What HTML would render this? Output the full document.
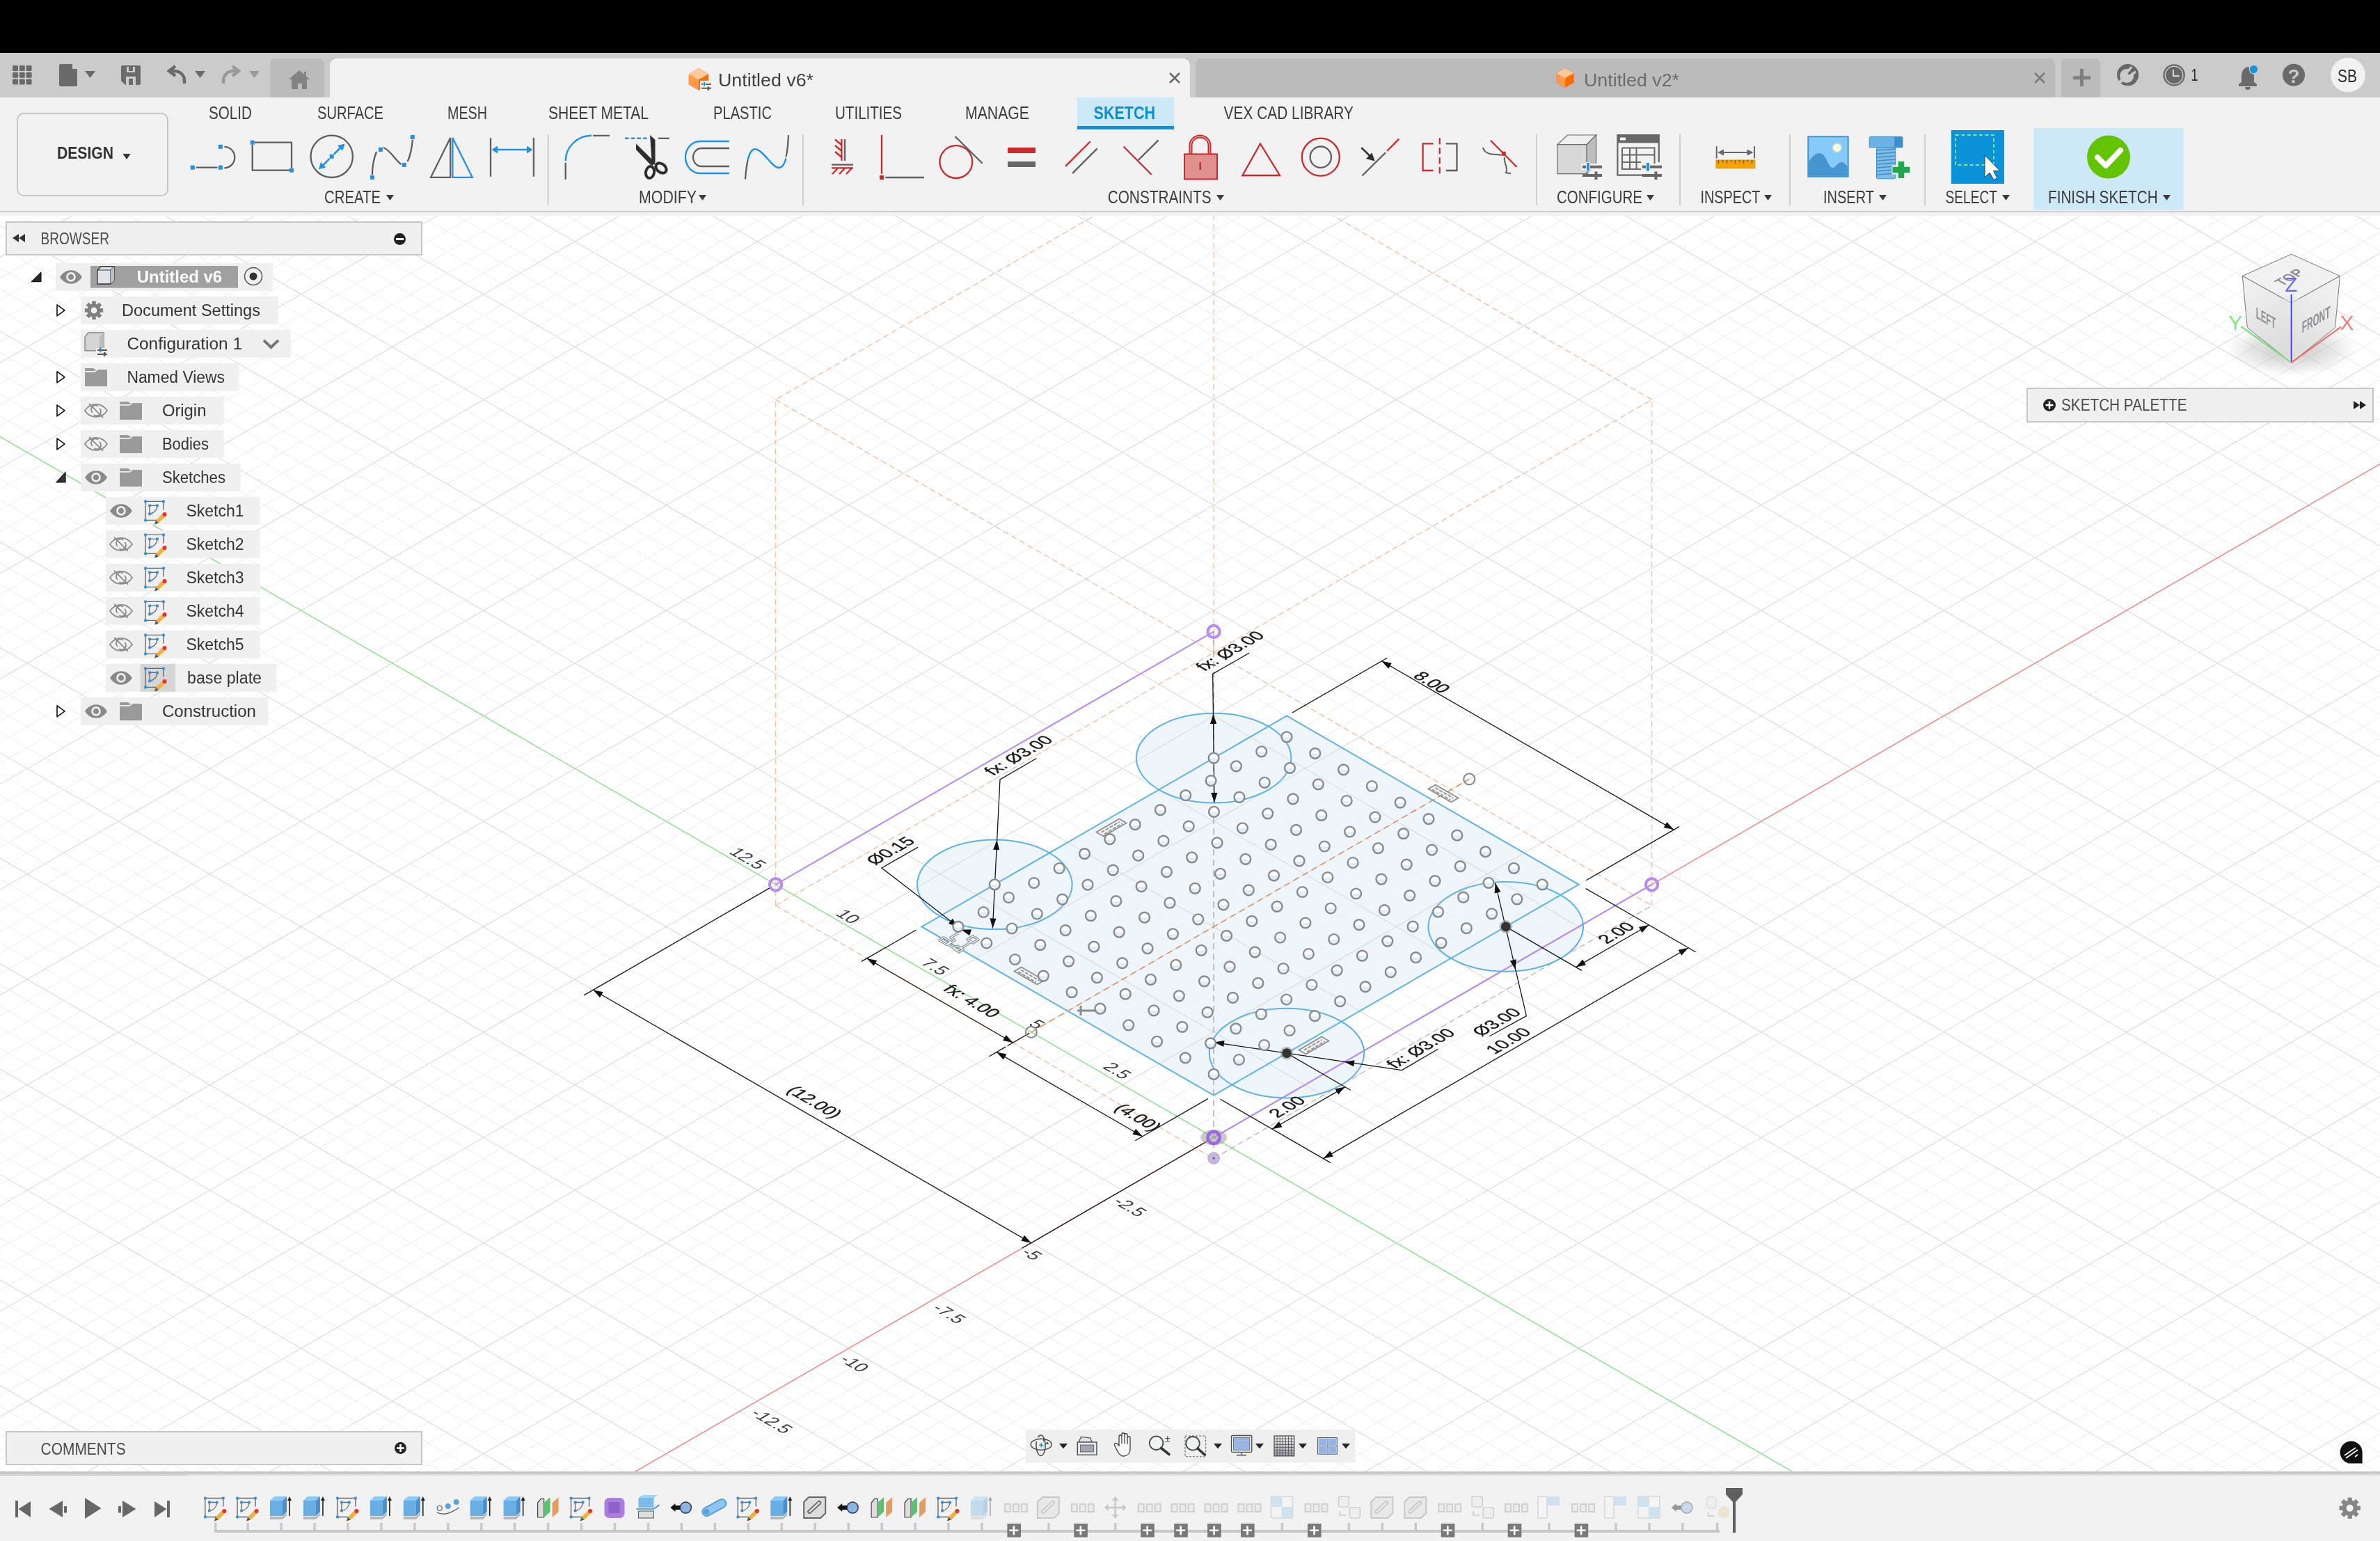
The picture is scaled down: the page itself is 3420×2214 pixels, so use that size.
<!DOCTYPE html><html><head><meta charset="utf-8"><style>
html,body{margin:0;padding:0;width:3420px;height:2214px;overflow:hidden;background:#fff;font-family:"Liberation Sans", sans-serif;}
.abs{position:absolute;}
svg text{font-family:"Liberation Sans", sans-serif;}
</style></head><body>
<div class="abs" style="left:0;top:0;width:3420px;height:76px;background:#000"></div>
<div class="abs" style="left:0;top:76px;width:3420px;height:64px;background:#cbcbcb"></div>
<div class="abs" style="left:0;top:140px;width:3420px;height:163px;background:#f2f2f2;border-bottom:2px solid #cbcbcb"></div><div class="abs" style="left:0;top:305px;width:3420px;height:5px;background:#f2f2f2"></div>
<div class="abs" style="left:0;top:2114px;width:3420px;height:100px;background:#f2f2f2"></div>
<svg class="abs" style="left:0;top:0;will-change:transform" width="3420" height="2214" viewBox="0 0 3420 2214"><defs><clipPath id="vpc"><rect x="0" y="310" width="3420" height="1804"/></clipPath></defs><g clip-path="url(#vpc)"><rect x="0" y="310" width="3420" height="1804" fill="#ffffff"/><g opacity="1"><path d="M1744.1 1573.7L2268.7 1270.8L1849.0 1028.5L1324.4 1331.4Z" fill="#eef6fc"/><ellipse cx="1849.0" cy="1513.1" rx="111.3" ry="64.3" fill="#eef6fc"/><ellipse cx="2163.8" cy="1331.4" rx="111.3" ry="64.3" fill="#eef6fc"/><ellipse cx="1429.3" cy="1270.8" rx="111.3" ry="64.3" fill="#eef6fc"/><ellipse cx="1744.1" cy="1089.1" rx="111.3" ry="64.3" fill="#eef6fc"/></g><path d="M0 2111.45L3420 4086.00M0 2081.16L3420 4055.71M0 2050.87L3420 4025.42M0 2020.58L3420 3995.14M0 1960.01L3420 3934.56M0 1929.72L3420 3904.27M0 1899.43L3420 3873.98M0 1869.14L3420 3843.70M0 1808.57L3420 3783.12M0 1778.28L3420 3752.83M0 1747.99L3420 3722.54M0 1717.70L3420 3692.26M0 1657.13L3420 3631.68M0 1626.84L3420 3601.39M0 1596.55L3420 3571.10M0 1566.26L3420 3540.82M0 1505.69L3420 3480.24M0 1475.40L3420 3449.95M0 1445.11L3420 3419.66M0 1414.82L3420 3389.38M0 1354.25L3420 3328.80M0 1323.96L3420 3298.51M0 1293.67L3420 3268.22M0 1263.38L3420 3237.94M0 1202.81L3420 3177.36M0 1172.52L3420 3147.07M0 1142.23L3420 3116.78M0 1111.94L3420 3086.50M0 1051.37L3420 3025.92M0 1021.08L3420 2995.63M0 990.79L3420 2965.34M0 960.50L3420 2935.06M0 899.93L3420 2874.48M0 869.64L3420 2844.19M0 839.35L3420 2813.90M0 809.06L3420 2783.62M0 748.49L3420 2723.04M0 718.20L3420 2692.75M0 687.91L3420 2662.46M0 657.62L3420 2632.18M0 597.05L3420 2571.60M0 566.76L3420 2541.31M0 536.47L3420 2511.02M0 506.18L3420 2480.74M0 445.61L3420 2420.16M0 415.32L3420 2389.87M0 385.03L3420 2359.58M0 354.74L3420 2329.30M0 294.17L3420 2268.72M0 263.88L3420 2238.43M0 233.59L3420 2208.14M0 203.30L3420 2177.86M0 142.73L3420 2117.28M0 112.44L3420 2086.99M0 82.15L3420 2056.70M0 51.86L3420 2026.42M0 -8.71L3420 1965.84M0 -39.00L3420 1935.55M0 -69.29L3420 1905.26M0 -99.58L3420 1874.98M0 -160.15L3420 1814.40M0 -190.44L3420 1784.11M0 -220.73L3420 1753.82M0 -251.02L3420 1723.54M0 -311.59L3420 1662.96M0 -341.88L3420 1632.67M0 -372.17L3420 1602.38M0 -402.46L3420 1572.10M0 -463.03L3420 1511.52M0 -493.32L3420 1481.23M0 -523.61L3420 1450.94M0 -553.90L3420 1420.66M0 -614.47L3420 1360.08M0 -644.76L3420 1329.79M0 -675.05L3420 1299.50M0 -705.34L3420 1269.22M0 -765.91L3420 1208.64M0 -796.20L3420 1178.35M0 -826.49L3420 1148.06M0 -856.78L3420 1117.78M0 -917.35L3420 1057.20M0 -947.64L3420 1026.91M0 -977.93L3420 996.62M0 -1008.22L3420 966.34M0 -1068.79L3420 905.76M0 -1099.08L3420 875.47M0 -1129.37L3420 845.18M0 -1159.66L3420 814.90M0 -1220.23L3420 754.32M0 -1250.52L3420 724.03M0 -1280.81L3420 693.74M0 -1311.10L3420 663.46M0 -1371.67L3420 602.88M0 -1401.96L3420 572.59M0 -1432.25L3420 542.30M0 -1462.54L3420 512.02M0 -1523.11L3420 451.44M0 -1553.40L3420 421.15M0 -1583.69L3420 390.86M0 -1613.98L3420 360.58M0 -1674.55L3420 300.00M0 4125.38L3420 2150.82M0 4095.09L3420 2120.54M0 4064.80L3420 2090.25M0 4034.51L3420 2059.96M0 3973.94L3420 1999.38M0 3943.65L3420 1969.10M0 3913.36L3420 1938.81M0 3883.07L3420 1908.52M0 3822.50L3420 1847.94M0 3792.21L3420 1817.66M0 3761.92L3420 1787.37M0 3731.63L3420 1757.08M0 3671.06L3420 1696.50M0 3640.77L3420 1666.22M0 3610.48L3420 1635.93M0 3580.19L3420 1605.64M0 3519.62L3420 1545.06M0 3489.33L3420 1514.78M0 3459.04L3420 1484.49M0 3428.75L3420 1454.20M0 3368.18L3420 1393.62M0 3337.89L3420 1363.34M0 3307.60L3420 1333.05M0 3277.31L3420 1302.76M0 3216.74L3420 1242.18M0 3186.45L3420 1211.90M0 3156.16L3420 1181.61M0 3125.87L3420 1151.32M0 3065.30L3420 1090.74M0 3035.01L3420 1060.46M0 3004.72L3420 1030.17M0 2974.43L3420 999.88M0 2913.86L3420 939.30M0 2883.57L3420 909.02M0 2853.28L3420 878.73M0 2822.99L3420 848.44M0 2762.42L3420 787.86M0 2732.13L3420 757.58M0 2701.84L3420 727.29M0 2671.55L3420 697.00M0 2610.98L3420 636.42M0 2580.69L3420 606.14M0 2550.40L3420 575.85M0 2520.11L3420 545.56M0 2459.54L3420 484.98M0 2429.25L3420 454.70M0 2398.96L3420 424.41M0 2368.67L3420 394.12M0 2308.10L3420 333.54M0 2277.81L3420 303.26M0 2247.52L3420 272.97M0 2217.23L3420 242.68M0 2156.66L3420 182.10M0 2126.37L3420 151.82M0 2096.08L3420 121.53M0 2065.79L3420 91.24M0 2005.22L3420 30.66M0 1974.93L3420 0.38M0 1944.64L3420 -29.91M0 1914.35L3420 -60.20M0 1853.78L3420 -120.78M0 1823.49L3420 -151.06M0 1793.20L3420 -181.35M0 1762.91L3420 -211.64M0 1702.34L3420 -272.22M0 1672.05L3420 -302.50M0 1641.76L3420 -332.79M0 1611.47L3420 -363.08M0 1550.90L3420 -423.66M0 1520.61L3420 -453.94M0 1490.32L3420 -484.23M0 1460.03L3420 -514.52M0 1399.46L3420 -575.10M0 1369.17L3420 -605.38M0 1338.88L3420 -635.67M0 1308.59L3420 -665.96M0 1248.02L3420 -726.54M0 1217.73L3420 -756.82M0 1187.44L3420 -787.11M0 1157.15L3420 -817.40M0 1096.58L3420 -877.98M0 1066.29L3420 -908.26M0 1036.00L3420 -938.55M0 1005.71L3420 -968.84M0 945.14L3420 -1029.42M0 914.85L3420 -1059.70M0 884.56L3420 -1089.99M0 854.27L3420 -1120.28M0 793.70L3420 -1180.86M0 763.41L3420 -1211.14M0 733.12L3420 -1241.43M0 702.83L3420 -1271.72M0 642.26L3420 -1332.30M0 611.97L3420 -1362.58M0 581.68L3420 -1392.87M0 551.39L3420 -1423.16M0 490.82L3420 -1483.74M0 460.53L3420 -1514.02M0 430.24L3420 -1544.31M0 399.95L3420 -1574.60M0 339.38L3420 -1635.18M0 309.09L3420 -1665.46M0 278.80L3420 -1695.75" stroke="#efefef" stroke-width="1.05" fill="none"/><path d="M0 2141.74L3420 4116.29M0 1990.30L3420 3964.85M0 1838.86L3420 3813.41M0 1687.42L3420 3661.97M0 1535.98L3420 3510.53M0 1384.54L3420 3359.09M0 1233.10L3420 3207.65M0 1081.66L3420 3056.21M0 930.22L3420 2904.77M0 778.78L3420 2753.33M0 627.34L3420 2601.89M0 475.90L3420 2450.45M0 324.46L3420 2299.01M0 173.02L3420 2147.57M0 21.58L3420 1996.13M0 -129.86L3420 1844.69M0 -281.30L3420 1693.25M0 -432.74L3420 1541.81M0 -584.18L3420 1390.37M0 -735.62L3420 1238.93M0 -887.06L3420 1087.49M0 -1038.50L3420 936.05M0 -1189.94L3420 784.61M0 -1341.38L3420 633.17M0 -1492.82L3420 481.73M0 -1644.26L3420 330.29M0 4155.66L3420 2181.11M0 4004.22L3420 2029.67M0 3852.78L3420 1878.23M0 3701.34L3420 1726.79M0 3549.90L3420 1575.35M0 3398.46L3420 1423.91M0 3247.02L3420 1272.47M0 3095.58L3420 1121.03M0 2944.14L3420 969.59M0 2792.70L3420 818.15M0 2641.26L3420 666.71M0 2489.82L3420 515.27M0 2338.38L3420 363.83M0 2186.94L3420 212.39M0 2035.50L3420 60.95M0 1884.06L3420 -90.49M0 1732.62L3420 -241.93M0 1581.18L3420 -393.37M0 1429.74L3420 -544.81M0 1278.30L3420 -696.25M0 1126.86L3420 -847.69M0 975.42L3420 -999.13M0 823.98L3420 -1150.57M0 672.54L3420 -1302.01M0 521.10L3420 -1453.45M0 369.66L3420 -1604.89" stroke="#dcdcdc" stroke-width="1.15" fill="none"/><defs><linearGradient id="holeg" x1="0" y1="0" x2="0" y2="1"><stop offset="0" stop-color="#f7fbfe"/><stop offset="0.45" stop-color="#ffffff"/><stop offset="0.6" stop-color="#d9ebf7"/><stop offset="1" stop-color="#eef6fb"/></linearGradient></defs><path d="M0 2641.3L3420 666.7" stroke="#f28a8a" stroke-width="1.5"/><path d="M0 627.3L3420 2601.9" stroke="#8ee68e" stroke-width="1.5"/><path d="M1744.1 937.7L2373.6 574.2" stroke="#f0c3a2" stroke-width="1.4" fill="none" stroke-dasharray="8 5.5" /><path d="M2373.6 574.2L1744.1 210.8" stroke="#f0c3a2" stroke-width="1.4" fill="none" stroke-dasharray="8 5.5" /><path d="M1744.1 210.8L1114.6 574.2" stroke="#f0c3a2" stroke-width="1.4" fill="none" stroke-dasharray="8 5.5" /><path d="M1114.6 574.2L1744.1 937.7" stroke="#f0c3a2" stroke-width="1.4" fill="none" stroke-dasharray="8 5.5" /><path d="M1114.6 1301.1L1744.1 1664.6" stroke="#f0c3a2" stroke-width="1.4" fill="none" stroke-dasharray="8 5.5" /><path d="M1114.6 1301.1L1744.1 937.7" stroke="#f0c3a2" stroke-width="1.4" fill="none" stroke-dasharray="8 5.5" /><path d="M1744.1 937.7L2373.6 1301.1" stroke="#f0c3a2" stroke-width="1.4" fill="none" stroke-dasharray="8 5.5" /><path d="M1744.1 1664.6L2373.6 1301.1" stroke="#b0b0b0" stroke-width="1.2" fill="none" stroke-dasharray="8 5.5" /><path d="M1114.6 1301.1L1114.6 574.2" stroke="#f0c3a2" stroke-width="1.4" fill="none" stroke-dasharray="8 5.5" /><path d="M2373.6 1301.1L2373.6 574.2" stroke="#f0c3a2" stroke-width="1.4" fill="none" stroke-dasharray="8 5.5" /><path d="M1744.1 937.7L1744.1 210.8" stroke="#f0c3a2" stroke-width="1.4" fill="none" stroke-dasharray="8 5.5" /><path d="M1744.1 937.7L1744.1 907.4" stroke="#f0c3a2" stroke-width="1.4" fill="none" stroke-dasharray="8 5.5" /><path d="M1481.8 1482.9L2111.3 1119.4" stroke="#dd8a4e" stroke-width="1.6" fill="none" stroke-dasharray="9 6" /><path d="M1744.1 1664.0L1744.1 907.0" stroke="#9c9c9c" stroke-width="1.25" fill="none" stroke-dasharray="9 6" /><path d="M1744.1 1634.3L2373.6 1270.8" stroke="#b98af4" stroke-width="2.1" fill="none" /><path d="M1114.6 1270.8L1744.1 907.4" stroke="#b98af4" stroke-width="2.1" fill="none" /><path d="M1744.1 1573.7L2268.7 1270.8L1849.0 1028.5L1324.4 1331.4Z" fill="none" stroke="#5db3e4" stroke-width="2.0"/><ellipse cx="1849.0" cy="1513.1" rx="111.3" ry="64.3" fill="none" stroke="#5db3e4" stroke-width="2.0"/><ellipse cx="2163.8" cy="1331.4" rx="111.3" ry="64.3" fill="none" stroke="#5db3e4" stroke-width="2.0"/><ellipse cx="1429.3" cy="1270.8" rx="111.3" ry="64.3" fill="none" stroke="#5db3e4" stroke-width="2.0"/><ellipse cx="1744.1" cy="1089.1" rx="111.3" ry="64.3" fill="none" stroke="#5db3e4" stroke-width="2.0"/><text x="0" y="0" font-size="25" fill="#3c3c3c" stroke="#3c3c3c" stroke-width="0" text-anchor="middle" transform="matrix(0.866,0.5,-0.866,0.5,1067.2,1237.5)">12.5</text><text x="0" y="0" font-size="25" fill="#3c3c3c" stroke="#3c3c3c" stroke-width="0" text-anchor="middle" transform="matrix(0.866,0.5,-0.866,0.5,1211.5,1320.9)">10</text><text x="0" y="0" font-size="25" fill="#3c3c3c" stroke="#3c3c3c" stroke-width="0" text-anchor="middle" transform="matrix(0.866,0.5,-0.866,0.5,1336.5,1393.3)">7.5</text><text x="0" y="0" font-size="25" fill="#3c3c3c" stroke="#3c3c3c" stroke-width="0" text-anchor="middle" transform="matrix(0.866,0.5,-0.866,0.5,1482.8,1475.8)">5</text><text x="0" y="0" font-size="25" fill="#3c3c3c" stroke="#3c3c3c" stroke-width="0" text-anchor="middle" transform="matrix(0.866,0.5,-0.866,0.5,1598.2,1542.5)">2.5</text><text x="0" y="0" font-size="25" fill="#3c3c3c" stroke="#3c3c3c" stroke-width="0" text-anchor="middle" transform="matrix(0.866,0.5,-0.866,0.5,1616.5,1738.2)">-2.5</text><text x="0" y="0" font-size="25" fill="#3c3c3c" stroke="#3c3c3c" stroke-width="0" text-anchor="middle" transform="matrix(0.866,0.5,-0.866,0.5,1475.4,1806.0)">-5</text><text x="0" y="0" font-size="25" fill="#3c3c3c" stroke="#3c3c3c" stroke-width="0" text-anchor="middle" transform="matrix(0.866,0.5,-0.866,0.5,1356.6,1891.6)">-7.5</text><text x="0" y="0" font-size="25" fill="#3c3c3c" stroke="#3c3c3c" stroke-width="0" text-anchor="middle" transform="matrix(0.866,0.5,-0.866,0.5,1220.4,1963.4)">-10</text><text x="0" y="0" font-size="25" fill="#3c3c3c" stroke="#3c3c3c" stroke-width="0" text-anchor="middle" transform="matrix(0.866,0.5,-0.866,0.5,1101.6,2046.1)">-12.5</text><path d="M1106.7 1275.4L839.2 1429.9" stroke="#161616" stroke-width="1.3" fill="none" /><path d="M1736.2 1638.8L1468.7 1793.3" stroke="#161616" stroke-width="1.3" fill="none" /><path d="M852.3 1422.3L1481.8 1785.7" stroke="#161616" stroke-width="1.3" fill="none" /><path d="M852.3 1422.3L866.7 1425.3L862.1 1433.3Z" fill="#111"/><path d="M1481.8 1785.7L1467.4 1782.7L1472.0 1774.8Z" fill="#111"/><text x="0" y="0" font-size="25" fill="#1a1a1a" stroke="#1a1a1a" stroke-width="0.45" text-anchor="middle" transform="matrix(0.866,0.5,-0.866,0.5,1163.2,1587.5)">(12.00)</text><path d="M1316.6 1336.0L1237.9 1381.4" stroke="#161616" stroke-width="1.3" fill="none" /><path d="M1479.2 1484.4L1447.7 1502.5" stroke="#161616" stroke-width="1.3" fill="none" /><path d="M1245.7 1376.9L1455.6 1498.0" stroke="#2a1a10" stroke-width="1.3" fill="none" /><path d="M1245.7 1376.9L1260.2 1379.9L1255.6 1387.8Z" fill="#111"/><path d="M1455.6 1498.0L1441.1 1495.0L1445.7 1487.0Z" fill="#111"/><text x="0" y="0" font-size="25" fill="#1a1a1a" stroke="#1a1a1a" stroke-width="0.45" text-anchor="middle" transform="matrix(0.866,0.5,-0.866,0.5,1389.2,1442.5)">fx: 4.00</text><path d="M1445.1 1504.1L1421.5 1517.7" stroke="#161616" stroke-width="1.3" fill="none" /><path d="M1735.7 1578.6L1631.3 1638.8" stroke="#161616" stroke-width="1.3" fill="none" /><path d="M1432.0 1511.6L1641.8 1632.8" stroke="#161616" stroke-width="1.3" fill="none" /><path d="M1432.0 1511.6L1446.4 1514.6L1441.8 1522.6Z" fill="#111"/><path d="M1641.8 1632.8L1627.4 1629.8L1632.0 1621.8Z" fill="#111"/><text x="0" y="0" font-size="25" fill="#1a1a1a" stroke="#1a1a1a" stroke-width="0.45" text-anchor="middle" transform="matrix(0.866,0.5,-0.866,0.5,1628.2,1609.5)">(4.00)</text><path d="M1856.9 1024.0L1993.3 945.2" stroke="#161616" stroke-width="1.3" fill="none" /><path d="M2279.2 1264.8L2413.0 1187.6" stroke="#161616" stroke-width="1.3" fill="none" /><path d="M1985.4 949.8L2405.1 1192.1" stroke="#161616" stroke-width="1.3" fill="none" /><path d="M1985.4 949.8L1999.8 952.8L1995.2 960.8Z" fill="#111"/><path d="M2405.1 1192.1L2390.7 1189.1L2395.3 1181.1Z" fill="#111"/><text x="0" y="0" font-size="25" fill="#1a1a1a" stroke="#1a1a1a" stroke-width="0.45" text-anchor="middle" transform="matrix(0.866,0.5,-0.866,0.5,2050.2,984.5)">8.00</text><path d="M1753.5 1579.2L1912.0 1670.6" stroke="#161616" stroke-width="1.3" fill="none" /><path d="M2278.7 1276.6L2436.6 1367.8" stroke="#161616" stroke-width="1.3" fill="none" /><path d="M1901.5 1664.6L2426.1 1361.7" stroke="#161616" stroke-width="1.3" fill="none" /><path d="M1901.5 1664.6L1911.3 1653.6L1915.9 1661.6Z" fill="#111"/><path d="M2426.1 1361.7L2416.3 1372.7L2411.7 1364.7Z" fill="#111"/><text x="0" y="0" font-size="25" fill="#1a1a1a" stroke="#1a1a1a" stroke-width="0.45" text-anchor="middle" transform="matrix(0.866,-0.5,0.866,0.5,2174.8,1499.5)">10.00</text><path d="M1849.0 1513.1L1940.8 1566.2" stroke="#161616" stroke-width="1.3" fill="none" /><path d="M1828.0 1622.2L1933.0 1561.6" stroke="#161616" stroke-width="1.3" fill="none" /><path d="M1828.0 1622.2L1837.9 1611.2L1842.5 1619.2Z" fill="#111"/><path d="M1933.0 1561.6L1923.1 1572.6L1918.5 1564.6Z" fill="#111"/><text x="0" y="0" font-size="25" fill="#1a1a1a" stroke="#1a1a1a" stroke-width="0.45" text-anchor="middle" transform="matrix(0.866,-0.5,0.866,0.5,1856.8,1594.5)">2.00</text><path d="M2163.8 1331.4L2272.9 1394.4" stroke="#161616" stroke-width="1.3" fill="none" /><path d="M2264.5 1389.6L2369.4 1329.0" stroke="#161616" stroke-width="1.3" fill="none" /><path d="M2264.5 1389.6L2274.3 1378.6L2278.9 1386.6Z" fill="#111"/><path d="M2369.4 1329.0L2359.6 1340.0L2355.0 1332.0Z" fill="#111"/><text x="0" y="0" font-size="25" fill="#1a1a1a" stroke="#1a1a1a" stroke-width="0.45" text-anchor="middle" transform="matrix(0.866,-0.5,0.866,0.5,2329.8,1344.5)">2.00</text><path d="M1745 1153L1742.7 968.2L1795 938.3" stroke="#161616" stroke-width="1.3" fill="none"/><path d="M1743.5 1026.0L1748.2 1040.0L1739.0 1040.0Z" fill="#111"/><path d="M1745.0 1153.0L1740.2 1139.1L1749.4 1138.9Z" fill="#111"/><text x="0" y="0" font-size="25" fill="#1a1a1a" stroke="#1a1a1a" stroke-width="0.45" text-anchor="middle" transform="matrix(0.866,-0.5,0.866,0.5,1774.8,939.5)">fx: Ø3.00</text><path d="M1426.4 1333.5L1437 1120L1489.5 1089.5" stroke="#161616" stroke-width="1.3" fill="none"/><path d="M1432.4 1207.0L1436.2 1221.2L1427.1 1220.7Z" fill="#111"/><path d="M1426.4 1333.5L1422.4 1319.3L1431.6 1319.7Z" fill="#111"/><text x="0" y="0" font-size="25" fill="#1a1a1a" stroke="#1a1a1a" stroke-width="0.45" text-anchor="middle" transform="matrix(0.866,-0.5,0.866,0.5,1470.8,1089.5)">fx: Ø3.00</text><path d="M1319.2 1217.1L1267 1247L1376 1331" stroke="#161616" stroke-width="1.3" fill="none"/><path d="M1377.0 1332.0L1363.1 1327.1L1368.7 1319.8Z" fill="#111"/><path d="M1381.3 1335.4L1396.0 1335.5L1393.1 1344.2Z" fill="#111"/><text x="0" y="0" font-size="25" fill="#1a1a1a" stroke="#1a1a1a" stroke-width="0.45" text-anchor="middle" transform="matrix(0.866,-0.5,0.866,0.5,1286.8,1226.5)">Ø0.15</text><path d="M1747 1498L2014.3 1537.6L2066.4 1507.3" stroke="#161616" stroke-width="1.3" fill="none"/><path d="M1745.0 1497.5L1759.5 1495.0L1758.2 1504.1Z" fill="#111"/><path d="M1932.0 1525.8L1946.5 1523.2L1945.2 1532.3Z" fill="#111"/><text x="0" y="0" font-size="25" fill="#1a1a1a" stroke="#1a1a1a" stroke-width="0.45" text-anchor="middle" transform="matrix(0.866,-0.5,0.866,0.5,2048.8,1510.5)">fx: Ø3.00</text><path d="M2148.7 1268.7L2193.4 1459.6L2140.3 1488.8" stroke="#161616" stroke-width="1.3" fill="none"/><path d="M2148.7 1268.7L2156.5 1281.2L2147.6 1283.4Z" fill="#111"/><path d="M2177.5 1393.0L2169.9 1380.4L2178.9 1378.3Z" fill="#111"/><text x="0" y="0" font-size="25" fill="#1a1a1a" stroke="#1a1a1a" stroke-width="0.45" text-anchor="middle" transform="matrix(0.866,-0.5,0.866,0.5,2157.8,1472.5)">Ø3.00</text><path d="M2062.7 1127.5L2095.7 1146.5L2085.3 1152.5L2052.3 1133.5Z" fill="#f2f2f2" stroke="#8c8c8c" stroke-width="1.7"/><path d="M2062.3 1131.8L2088.3 1146.8M2058.0 1134.2L2084.0 1149.2" stroke="#8c8c8c" stroke-width="1.8" stroke-dasharray="5 2"/><path d="M1575.4 1195.5L1608.3 1176.5L1618.6 1182.5L1585.7 1201.5Z" fill="#f2f2f2" stroke="#8c8c8c" stroke-width="1.7"/><path d="M1582.7 1195.8L1608.7 1180.8M1587.0 1198.2L1613.0 1183.2" stroke="#8c8c8c" stroke-width="1.8" stroke-dasharray="5 2"/><path d="M1467.7 1389.5L1500.6 1408.5L1490.3 1414.5L1457.4 1395.5Z" fill="#f2f2f2" stroke="#8c8c8c" stroke-width="1.7"/><path d="M1467.3 1393.8L1493.3 1408.8M1463.0 1396.2L1489.0 1411.2" stroke="#8c8c8c" stroke-width="1.8" stroke-dasharray="5 2"/><path d="M1866.4 1508.5L1899.3 1489.5L1909.6 1495.5L1876.7 1514.5Z" fill="#f2f2f2" stroke="#8c8c8c" stroke-width="1.7"/><path d="M1873.7 1508.8L1899.7 1493.8M1878.0 1511.2L1904.0 1496.2" stroke="#8c8c8c" stroke-width="1.8" stroke-dasharray="5 2"/><path d="M1548 1452L1575 1452M1553 1445V1459" stroke="#8c8c8c" stroke-width="3"/><path d="M1376.8 1340.6L1366 1347L1372 1351L1362 1357L1376 1365L1390 1357L1397 1351M1350 1351L1356 1347L1366 1353L1360 1357Z M1390 1350L1398 1345L1406 1350L1398 1355Z M1370 1362L1376 1359L1384 1364L1378 1368Z" fill="none" stroke="#8c8c8c" stroke-width="3.6" stroke-linejoin="round"/><path d="M1376.8 1340.6L1366 1347L1372 1351L1362 1357L1376 1365L1390 1357L1397 1351M1350 1351L1356 1347L1366 1353L1360 1357Z M1390 1350L1398 1345L1406 1350L1398 1355Z M1370 1362L1376 1359L1384 1364L1378 1368Z" fill="none" stroke="#f4f8fb" stroke-width="1.3" stroke-linejoin="round"/><circle cx="1744.1" cy="1543.4" r="7.4" fill="url(#holeg)" stroke="#8a8a8a" stroke-width="2.4"/><circle cx="1703.3" cy="1519.9" r="7.4" fill="url(#holeg)" stroke="#8a8a8a" stroke-width="2.4"/><circle cx="1662.5" cy="1496.3" r="7.4" fill="url(#holeg)" stroke="#8a8a8a" stroke-width="2.4"/><circle cx="1621.7" cy="1472.8" r="7.4" fill="url(#holeg)" stroke="#8a8a8a" stroke-width="2.4"/><circle cx="1580.9" cy="1449.2" r="7.4" fill="url(#holeg)" stroke="#8a8a8a" stroke-width="2.4"/><circle cx="1540.1" cy="1425.6" r="7.4" fill="url(#holeg)" stroke="#8a8a8a" stroke-width="2.4"/><circle cx="1499.3" cy="1402.1" r="7.4" fill="url(#holeg)" stroke="#8a8a8a" stroke-width="2.4"/><circle cx="1458.5" cy="1378.5" r="7.4" fill="url(#holeg)" stroke="#8a8a8a" stroke-width="2.4"/><circle cx="1417.7" cy="1355.0" r="7.4" fill="url(#holeg)" stroke="#8a8a8a" stroke-width="2.4"/><circle cx="1376.9" cy="1331.4" r="7.4" fill="url(#holeg)" stroke="#8a8a8a" stroke-width="2.4"/><circle cx="1780.4" cy="1522.5" r="7.4" fill="url(#holeg)" stroke="#8a8a8a" stroke-width="2.4"/><circle cx="1739.6" cy="1498.9" r="7.4" fill="url(#holeg)" stroke="#8a8a8a" stroke-width="2.4"/><circle cx="1698.8" cy="1475.4" r="7.4" fill="url(#holeg)" stroke="#8a8a8a" stroke-width="2.4"/><circle cx="1658.0" cy="1451.8" r="7.4" fill="url(#holeg)" stroke="#8a8a8a" stroke-width="2.4"/><circle cx="1617.2" cy="1428.2" r="7.4" fill="url(#holeg)" stroke="#8a8a8a" stroke-width="2.4"/><circle cx="1576.4" cy="1404.7" r="7.4" fill="url(#holeg)" stroke="#8a8a8a" stroke-width="2.4"/><circle cx="1535.6" cy="1381.1" r="7.4" fill="url(#holeg)" stroke="#8a8a8a" stroke-width="2.4"/><circle cx="1494.8" cy="1357.6" r="7.4" fill="url(#holeg)" stroke="#8a8a8a" stroke-width="2.4"/><circle cx="1454.0" cy="1334.0" r="7.4" fill="url(#holeg)" stroke="#8a8a8a" stroke-width="2.4"/><circle cx="1413.2" cy="1310.5" r="7.4" fill="url(#holeg)" stroke="#8a8a8a" stroke-width="2.4"/><circle cx="1816.7" cy="1501.5" r="7.4" fill="url(#holeg)" stroke="#8a8a8a" stroke-width="2.4"/><circle cx="1775.9" cy="1477.9" r="7.4" fill="url(#holeg)" stroke="#8a8a8a" stroke-width="2.4"/><circle cx="1735.1" cy="1454.4" r="7.4" fill="url(#holeg)" stroke="#8a8a8a" stroke-width="2.4"/><circle cx="1694.3" cy="1430.8" r="7.4" fill="url(#holeg)" stroke="#8a8a8a" stroke-width="2.4"/><circle cx="1653.5" cy="1407.3" r="7.4" fill="url(#holeg)" stroke="#8a8a8a" stroke-width="2.4"/><circle cx="1612.7" cy="1383.7" r="7.4" fill="url(#holeg)" stroke="#8a8a8a" stroke-width="2.4"/><circle cx="1571.9" cy="1360.2" r="7.4" fill="url(#holeg)" stroke="#8a8a8a" stroke-width="2.4"/><circle cx="1531.1" cy="1336.6" r="7.4" fill="url(#holeg)" stroke="#8a8a8a" stroke-width="2.4"/><circle cx="1490.3" cy="1313.0" r="7.4" fill="url(#holeg)" stroke="#8a8a8a" stroke-width="2.4"/><circle cx="1449.5" cy="1289.5" r="7.4" fill="url(#holeg)" stroke="#8a8a8a" stroke-width="2.4"/><circle cx="1853.1" cy="1480.5" r="7.4" fill="url(#holeg)" stroke="#8a8a8a" stroke-width="2.4"/><circle cx="1812.3" cy="1457.0" r="7.4" fill="url(#holeg)" stroke="#8a8a8a" stroke-width="2.4"/><circle cx="1771.5" cy="1433.4" r="7.4" fill="url(#holeg)" stroke="#8a8a8a" stroke-width="2.4"/><circle cx="1730.6" cy="1409.9" r="7.4" fill="url(#holeg)" stroke="#8a8a8a" stroke-width="2.4"/><circle cx="1689.8" cy="1386.3" r="7.4" fill="url(#holeg)" stroke="#8a8a8a" stroke-width="2.4"/><circle cx="1649.0" cy="1362.7" r="7.4" fill="url(#holeg)" stroke="#8a8a8a" stroke-width="2.4"/><circle cx="1608.2" cy="1339.2" r="7.4" fill="url(#holeg)" stroke="#8a8a8a" stroke-width="2.4"/><circle cx="1567.4" cy="1315.6" r="7.4" fill="url(#holeg)" stroke="#8a8a8a" stroke-width="2.4"/><circle cx="1526.6" cy="1292.1" r="7.4" fill="url(#holeg)" stroke="#8a8a8a" stroke-width="2.4"/><circle cx="1485.8" cy="1268.5" r="7.4" fill="url(#holeg)" stroke="#8a8a8a" stroke-width="2.4"/><circle cx="1889.4" cy="1459.6" r="7.4" fill="url(#holeg)" stroke="#8a8a8a" stroke-width="2.4"/><circle cx="1848.6" cy="1436.0" r="7.4" fill="url(#holeg)" stroke="#8a8a8a" stroke-width="2.4"/><circle cx="1807.8" cy="1412.4" r="7.4" fill="url(#holeg)" stroke="#8a8a8a" stroke-width="2.4"/><circle cx="1767.0" cy="1388.9" r="7.4" fill="url(#holeg)" stroke="#8a8a8a" stroke-width="2.4"/><circle cx="1726.2" cy="1365.3" r="7.4" fill="url(#holeg)" stroke="#8a8a8a" stroke-width="2.4"/><circle cx="1685.4" cy="1341.8" r="7.4" fill="url(#holeg)" stroke="#8a8a8a" stroke-width="2.4"/><circle cx="1644.6" cy="1318.2" r="7.4" fill="url(#holeg)" stroke="#8a8a8a" stroke-width="2.4"/><circle cx="1603.8" cy="1294.7" r="7.4" fill="url(#holeg)" stroke="#8a8a8a" stroke-width="2.4"/><circle cx="1563.0" cy="1271.1" r="7.4" fill="url(#holeg)" stroke="#8a8a8a" stroke-width="2.4"/><circle cx="1522.2" cy="1247.5" r="7.4" fill="url(#holeg)" stroke="#8a8a8a" stroke-width="2.4"/><circle cx="1925.7" cy="1438.6" r="7.4" fill="url(#holeg)" stroke="#8a8a8a" stroke-width="2.4"/><circle cx="1884.9" cy="1415.0" r="7.4" fill="url(#holeg)" stroke="#8a8a8a" stroke-width="2.4"/><circle cx="1844.1" cy="1391.5" r="7.4" fill="url(#holeg)" stroke="#8a8a8a" stroke-width="2.4"/><circle cx="1803.3" cy="1367.9" r="7.4" fill="url(#holeg)" stroke="#8a8a8a" stroke-width="2.4"/><circle cx="1762.5" cy="1344.4" r="7.4" fill="url(#holeg)" stroke="#8a8a8a" stroke-width="2.4"/><circle cx="1721.7" cy="1320.8" r="7.4" fill="url(#holeg)" stroke="#8a8a8a" stroke-width="2.4"/><circle cx="1680.9" cy="1297.2" r="7.4" fill="url(#holeg)" stroke="#8a8a8a" stroke-width="2.4"/><circle cx="1640.1" cy="1273.7" r="7.4" fill="url(#holeg)" stroke="#8a8a8a" stroke-width="2.4"/><circle cx="1599.3" cy="1250.1" r="7.4" fill="url(#holeg)" stroke="#8a8a8a" stroke-width="2.4"/><circle cx="1558.5" cy="1226.6" r="7.4" fill="url(#holeg)" stroke="#8a8a8a" stroke-width="2.4"/><circle cx="1962.0" cy="1417.6" r="7.4" fill="url(#holeg)" stroke="#8a8a8a" stroke-width="2.4"/><circle cx="1921.2" cy="1394.1" r="7.4" fill="url(#holeg)" stroke="#8a8a8a" stroke-width="2.4"/><circle cx="1880.4" cy="1370.5" r="7.4" fill="url(#holeg)" stroke="#8a8a8a" stroke-width="2.4"/><circle cx="1839.6" cy="1347.0" r="7.4" fill="url(#holeg)" stroke="#8a8a8a" stroke-width="2.4"/><circle cx="1798.8" cy="1323.4" r="7.4" fill="url(#holeg)" stroke="#8a8a8a" stroke-width="2.4"/><circle cx="1758.0" cy="1299.8" r="7.4" fill="url(#holeg)" stroke="#8a8a8a" stroke-width="2.4"/><circle cx="1717.2" cy="1276.3" r="7.4" fill="url(#holeg)" stroke="#8a8a8a" stroke-width="2.4"/><circle cx="1676.4" cy="1252.7" r="7.4" fill="url(#holeg)" stroke="#8a8a8a" stroke-width="2.4"/><circle cx="1635.6" cy="1229.2" r="7.4" fill="url(#holeg)" stroke="#8a8a8a" stroke-width="2.4"/><circle cx="1594.8" cy="1205.6" r="7.4" fill="url(#holeg)" stroke="#8a8a8a" stroke-width="2.4"/><circle cx="1998.3" cy="1396.7" r="7.4" fill="url(#holeg)" stroke="#8a8a8a" stroke-width="2.4"/><circle cx="1957.5" cy="1373.1" r="7.4" fill="url(#holeg)" stroke="#8a8a8a" stroke-width="2.4"/><circle cx="1916.7" cy="1349.5" r="7.4" fill="url(#holeg)" stroke="#8a8a8a" stroke-width="2.4"/><circle cx="1875.9" cy="1326.0" r="7.4" fill="url(#holeg)" stroke="#8a8a8a" stroke-width="2.4"/><circle cx="1835.1" cy="1302.4" r="7.4" fill="url(#holeg)" stroke="#8a8a8a" stroke-width="2.4"/><circle cx="1794.3" cy="1278.9" r="7.4" fill="url(#holeg)" stroke="#8a8a8a" stroke-width="2.4"/><circle cx="1753.5" cy="1255.3" r="7.4" fill="url(#holeg)" stroke="#8a8a8a" stroke-width="2.4"/><circle cx="1712.7" cy="1231.8" r="7.4" fill="url(#holeg)" stroke="#8a8a8a" stroke-width="2.4"/><circle cx="1671.9" cy="1208.2" r="7.4" fill="url(#holeg)" stroke="#8a8a8a" stroke-width="2.4"/><circle cx="1631.1" cy="1184.6" r="7.4" fill="url(#holeg)" stroke="#8a8a8a" stroke-width="2.4"/><circle cx="2034.6" cy="1375.7" r="7.4" fill="url(#holeg)" stroke="#8a8a8a" stroke-width="2.4"/><circle cx="1993.8" cy="1352.1" r="7.4" fill="url(#holeg)" stroke="#8a8a8a" stroke-width="2.4"/><circle cx="1953.0" cy="1328.6" r="7.4" fill="url(#holeg)" stroke="#8a8a8a" stroke-width="2.4"/><circle cx="1912.2" cy="1305.0" r="7.4" fill="url(#holeg)" stroke="#8a8a8a" stroke-width="2.4"/><circle cx="1871.4" cy="1281.5" r="7.4" fill="url(#holeg)" stroke="#8a8a8a" stroke-width="2.4"/><circle cx="1830.6" cy="1257.9" r="7.4" fill="url(#holeg)" stroke="#8a8a8a" stroke-width="2.4"/><circle cx="1789.8" cy="1234.3" r="7.4" fill="url(#holeg)" stroke="#8a8a8a" stroke-width="2.4"/><circle cx="1749.0" cy="1210.8" r="7.4" fill="url(#holeg)" stroke="#8a8a8a" stroke-width="2.4"/><circle cx="1708.2" cy="1187.2" r="7.4" fill="url(#holeg)" stroke="#8a8a8a" stroke-width="2.4"/><circle cx="1667.4" cy="1163.7" r="7.4" fill="url(#holeg)" stroke="#8a8a8a" stroke-width="2.4"/><circle cx="2071.0" cy="1354.7" r="7.4" fill="url(#holeg)" stroke="#8a8a8a" stroke-width="2.4"/><circle cx="2030.2" cy="1331.2" r="7.4" fill="url(#holeg)" stroke="#8a8a8a" stroke-width="2.4"/><circle cx="1989.4" cy="1307.6" r="7.4" fill="url(#holeg)" stroke="#8a8a8a" stroke-width="2.4"/><circle cx="1948.6" cy="1284.0" r="7.4" fill="url(#holeg)" stroke="#8a8a8a" stroke-width="2.4"/><circle cx="1907.8" cy="1260.5" r="7.4" fill="url(#holeg)" stroke="#8a8a8a" stroke-width="2.4"/><circle cx="1867.0" cy="1236.9" r="7.4" fill="url(#holeg)" stroke="#8a8a8a" stroke-width="2.4"/><circle cx="1826.2" cy="1213.4" r="7.4" fill="url(#holeg)" stroke="#8a8a8a" stroke-width="2.4"/><circle cx="1785.4" cy="1189.8" r="7.4" fill="url(#holeg)" stroke="#8a8a8a" stroke-width="2.4"/><circle cx="1744.5" cy="1166.3" r="7.4" fill="url(#holeg)" stroke="#8a8a8a" stroke-width="2.4"/><circle cx="1703.7" cy="1142.7" r="7.4" fill="url(#holeg)" stroke="#8a8a8a" stroke-width="2.4"/><circle cx="2107.3" cy="1333.7" r="7.4" fill="url(#holeg)" stroke="#8a8a8a" stroke-width="2.4"/><circle cx="2066.5" cy="1310.2" r="7.4" fill="url(#holeg)" stroke="#8a8a8a" stroke-width="2.4"/><circle cx="2025.7" cy="1286.6" r="7.4" fill="url(#holeg)" stroke="#8a8a8a" stroke-width="2.4"/><circle cx="1984.9" cy="1263.1" r="7.4" fill="url(#holeg)" stroke="#8a8a8a" stroke-width="2.4"/><circle cx="1944.1" cy="1239.5" r="7.4" fill="url(#holeg)" stroke="#8a8a8a" stroke-width="2.4"/><circle cx="1903.3" cy="1216.0" r="7.4" fill="url(#holeg)" stroke="#8a8a8a" stroke-width="2.4"/><circle cx="1862.5" cy="1192.4" r="7.4" fill="url(#holeg)" stroke="#8a8a8a" stroke-width="2.4"/><circle cx="1821.7" cy="1168.8" r="7.4" fill="url(#holeg)" stroke="#8a8a8a" stroke-width="2.4"/><circle cx="1780.9" cy="1145.3" r="7.4" fill="url(#holeg)" stroke="#8a8a8a" stroke-width="2.4"/><circle cx="1740.1" cy="1121.7" r="7.4" fill="url(#holeg)" stroke="#8a8a8a" stroke-width="2.4"/><circle cx="2143.6" cy="1312.8" r="7.4" fill="url(#holeg)" stroke="#8a8a8a" stroke-width="2.4"/><circle cx="2102.8" cy="1289.2" r="7.4" fill="url(#holeg)" stroke="#8a8a8a" stroke-width="2.4"/><circle cx="2062.0" cy="1265.7" r="7.4" fill="url(#holeg)" stroke="#8a8a8a" stroke-width="2.4"/><circle cx="2021.2" cy="1242.1" r="7.4" fill="url(#holeg)" stroke="#8a8a8a" stroke-width="2.4"/><circle cx="1980.4" cy="1218.6" r="7.4" fill="url(#holeg)" stroke="#8a8a8a" stroke-width="2.4"/><circle cx="1939.6" cy="1195.0" r="7.4" fill="url(#holeg)" stroke="#8a8a8a" stroke-width="2.4"/><circle cx="1898.8" cy="1171.4" r="7.4" fill="url(#holeg)" stroke="#8a8a8a" stroke-width="2.4"/><circle cx="1858.0" cy="1147.9" r="7.4" fill="url(#holeg)" stroke="#8a8a8a" stroke-width="2.4"/><circle cx="1817.2" cy="1124.3" r="7.4" fill="url(#holeg)" stroke="#8a8a8a" stroke-width="2.4"/><circle cx="1776.4" cy="1100.8" r="7.4" fill="url(#holeg)" stroke="#8a8a8a" stroke-width="2.4"/><circle cx="2179.9" cy="1291.8" r="7.4" fill="url(#holeg)" stroke="#8a8a8a" stroke-width="2.4"/><circle cx="2139.1" cy="1268.3" r="7.4" fill="url(#holeg)" stroke="#8a8a8a" stroke-width="2.4"/><circle cx="2098.3" cy="1244.7" r="7.4" fill="url(#holeg)" stroke="#8a8a8a" stroke-width="2.4"/><circle cx="2057.5" cy="1221.1" r="7.4" fill="url(#holeg)" stroke="#8a8a8a" stroke-width="2.4"/><circle cx="2016.7" cy="1197.6" r="7.4" fill="url(#holeg)" stroke="#8a8a8a" stroke-width="2.4"/><circle cx="1975.9" cy="1174.0" r="7.4" fill="url(#holeg)" stroke="#8a8a8a" stroke-width="2.4"/><circle cx="1935.1" cy="1150.5" r="7.4" fill="url(#holeg)" stroke="#8a8a8a" stroke-width="2.4"/><circle cx="1894.3" cy="1126.9" r="7.4" fill="url(#holeg)" stroke="#8a8a8a" stroke-width="2.4"/><circle cx="1853.5" cy="1103.4" r="7.4" fill="url(#holeg)" stroke="#8a8a8a" stroke-width="2.4"/><circle cx="1812.7" cy="1079.8" r="7.4" fill="url(#holeg)" stroke="#8a8a8a" stroke-width="2.4"/><circle cx="2216.2" cy="1270.8" r="7.4" fill="url(#holeg)" stroke="#8a8a8a" stroke-width="2.4"/><circle cx="2175.4" cy="1247.3" r="7.4" fill="url(#holeg)" stroke="#8a8a8a" stroke-width="2.4"/><circle cx="2134.6" cy="1223.7" r="7.4" fill="url(#holeg)" stroke="#8a8a8a" stroke-width="2.4"/><circle cx="2093.8" cy="1200.2" r="7.4" fill="url(#holeg)" stroke="#8a8a8a" stroke-width="2.4"/><circle cx="2053.0" cy="1176.6" r="7.4" fill="url(#holeg)" stroke="#8a8a8a" stroke-width="2.4"/><circle cx="2012.2" cy="1153.1" r="7.4" fill="url(#holeg)" stroke="#8a8a8a" stroke-width="2.4"/><circle cx="1971.4" cy="1129.5" r="7.4" fill="url(#holeg)" stroke="#8a8a8a" stroke-width="2.4"/><circle cx="1930.6" cy="1105.9" r="7.4" fill="url(#holeg)" stroke="#8a8a8a" stroke-width="2.4"/><circle cx="1889.8" cy="1082.4" r="7.4" fill="url(#holeg)" stroke="#8a8a8a" stroke-width="2.4"/><circle cx="1849.0" cy="1058.8" r="7.4" fill="url(#holeg)" stroke="#8a8a8a" stroke-width="2.4"/><circle cx="1429.3" cy="1270.8" r="7.4" fill="url(#holeg)" stroke="#8a8a8a" stroke-width="2.4"/><circle cx="1744.1" cy="1089.1" r="7.4" fill="url(#holeg)" stroke="#8a8a8a" stroke-width="2.4"/><circle cx="1849.0" cy="1513.1" r="9.5" fill="#8a8a8a" opacity="0.5"/><circle cx="1849.0" cy="1513.1" r="6.8" fill="#333"/><circle cx="2163.8" cy="1331.4" r="9.5" fill="#8a8a8a" opacity="0.5"/><circle cx="2163.8" cy="1331.4" r="6.8" fill="#333"/><circle cx="1114.6" cy="1270.8" r="8.6" fill="none" stroke="#b98af4" stroke-width="4"/><circle cx="2373.6" cy="1270.8" r="8.6" fill="none" stroke="#b98af4" stroke-width="4"/><circle cx="1744.1" cy="907.4" r="8.6" fill="none" stroke="#b98af4" stroke-width="4"/><ellipse cx="1744.1" cy="1634.3" rx="19" ry="11" fill="#9a9a9a" opacity="0.55"/><circle cx="1744.1" cy="1634.3" r="8.6" fill="none" stroke="#9d66e0" stroke-width="4.5"/><circle cx="1744.1" cy="1664" r="8" fill="#c9b3e6" stroke="#b9b9b9" stroke-width="2"/><circle cx="1744.1" cy="1664" r="1.5" fill="#555"/><circle cx="1481.8" cy="1482.9" r="8" fill="none" stroke="#8f8f8f" stroke-width="2.3"/><circle cx="2111.3" cy="1119.4" r="8" fill="none" stroke="#8f8f8f" stroke-width="2.3"/></g></svg><svg class="abs" style="left:0;top:0;will-change:transform" width="3420" height="2214" viewBox="0 0 3420 2214"><rect x="18.0" y="94.0" width="8" height="8" rx="1.6" fill="#6a6a6a"/><rect x="18.0" y="103.8" width="8" height="8" rx="1.6" fill="#6a6a6a"/><rect x="18.0" y="113.6" width="8" height="8" rx="1.6" fill="#6a6a6a"/><rect x="27.8" y="94.0" width="8" height="8" rx="1.6" fill="#6a6a6a"/><rect x="27.8" y="103.8" width="8" height="8" rx="1.6" fill="#6a6a6a"/><rect x="27.8" y="113.6" width="8" height="8" rx="1.6" fill="#6a6a6a"/><rect x="37.6" y="94.0" width="8" height="8" rx="1.6" fill="#6a6a6a"/><rect x="37.6" y="103.8" width="8" height="8" rx="1.6" fill="#6a6a6a"/><rect x="37.6" y="113.6" width="8" height="8" rx="1.6" fill="#6a6a6a"/><path d="M87 92H103L111 100V122a2 2 0 0 1-2 2H87a2 2 0 0 1-2-2V94a2 2 0 0 1 2-2Z" fill="#6a6a6a"/><path d="M103 92V100H111" fill="#cbcbcb" opacity="0.0"/><path d="M104 92L111 99H104Z" fill="#cbcbcb"/><path d="M122 102L137 102L129.5 112Z" fill="#6a6a6a"/><path d="M176 94H200a2 2 0 0 1 2 2V120a2 2 0 0 1-2 2H180L174 116V96a2 2 0 0 1 2-2Z" fill="#6a6a6a"/><rect x="182" y="96" width="12" height="8" fill="#cbcbcb"/><rect x="185" y="96" width="6" height="6" fill="#6a6a6a"/><rect x="181" y="110" width="14" height="12" fill="#cbcbcb"/><rect x="185" y="113" width="6" height="9" fill="#6a6a6a"/><path d="M265 120V116C265 107 258 102 250 102H245" stroke="#6a6a6a" stroke-width="4.5" fill="none"/><path d="M252 95L243 102L252 109" stroke="#6a6a6a" stroke-width="4.5" fill="none" stroke-linejoin="miter"/><path d="M280 102L295 102L287.5 112Z" fill="#6a6a6a"/><path d="M321 120V116C321 107 328 102 336 102H341" stroke="#999999" stroke-width="4.5" fill="none"/><path d="M334 95L343 102L334 109" stroke="#999999" stroke-width="4.5" fill="none"/><path d="M358 102L373 102L365.5 112Z" fill="#999999"/><path d="M388 140V92a8 8 0 0 1 8-8H458a8 8 0 0 1 8 8V140Z" fill="#bbbbbb"/><path d="M430 101L445 114H441V128H434V120H428V128H419V114H415Z" fill="#838383"/><rect x="437" y="103" width="3" height="7" fill="#838383"/><path d="M474 140V94a10 10 0 0 1 10-10H1700a10 10 0 0 1 10 10V140Z" fill="#f2f2f2"/><path d="M1004.0 98.0L1018.0 106.4L1018.0 121.6L1004.0 129.5L990.0 121.6L990.0 106.4Z" fill="#ff9a4c" stroke="#e9843a" stroke-width="0.6"/><path d="M1004.0 98.0L1018.0 106.4L1004.0 114.4L990.0 106.4Z" fill="#ffc99c"/><path d="M1004.0 114.4L1018.0 106.4L1018.0 121.6L1004.0 129.5Z" fill="#ff6c06"/><rect x="1006" y="116" width="16" height="14" fill="#f2f2f2"/><path d="M1008 120.9H1022M1008 126.8H1022" stroke="#5e5e5e" stroke-width="2"/><rect x="1010.6" y="117.5" width="3" height="6.5" fill="#1c8fe6" stroke="#f2f2f2" stroke-width="0.8"/><rect x="1016.6" y="124.5" width="2.6" height="5.5" fill="#5e5e5e"/><text x="1032" y="124" font-size="26" fill="#404040" font-weight="normal" text-anchor="start" textLength="137" lengthAdjust="spacingAndGlyphs" >Untitled v6*</text><path d="M1681 105L1695 119M1695 105L1681 119" stroke="#6a6a6a" stroke-width="2.6"/><path d="M1718 140V92a8 8 0 0 1 8-8H2945a8 8 0 0 1 8 8V140Z" fill="#bbbbbb"/><path d="M2249.1 98.0L2261.4 105.3L2261.4 118.7L2249.1 125.6L2236.9 118.7L2236.9 105.3Z" fill="#ff9a4c" stroke="#e9843a" stroke-width="0.6"/><path d="M2249.1 98.0L2261.4 105.3L2249.1 112.3L2236.9 105.3Z" fill="#ffc99c"/><path d="M2249.1 112.3L2261.4 105.3L2261.4 118.7L2249.1 125.6Z" fill="#ff6c06"/><text x="2276" y="124" font-size="26" fill="#6c6c6c" font-weight="normal" text-anchor="start" textLength="137" lengthAdjust="spacingAndGlyphs" >Untitled v2*</text><path d="M2924 105L2938 119M2938 105L2924 119" stroke="#7a7a7a" stroke-width="2.6"/><path d="M2962 140V92a8 8 0 0 1 8-8H3010a8 8 0 0 1 8 8V140Z" fill="#bbbbbb"/><path d="M2979 111.7H3004M2991.4 99V124" stroke="#808080" stroke-width="5"/><circle cx="3057.6" cy="107.6" r="15.6" fill="#676767"/><circle cx="3056.1" cy="109.1" r="10" fill="#cbcbcb"/><path d="M3055.6 103.6L3062.4 97.1M3061.1 110.1L3067.7999999999997 103.6" stroke="#cbcbcb" stroke-width="3.3" stroke-linecap="round"/><path d="M3058.6 106.6L3063.6 101.6" stroke="#676767" stroke-width="3.6"/><path d="M3049.6 114.6L3043.6 120.6" stroke="#cbcbcb" stroke-width="4.5"/><circle cx="3124.1" cy="107.9" r="14.6" stroke="#676767" stroke-width="2.3" fill="none"/><circle cx="3124.1" cy="107.9" r="12" fill="#676767"/><path d="M3122.9 100.3V109.1H3131.7" stroke="#d6d6d6" stroke-width="2.1" fill="none"/><text x="3148.5" y="115.6" font-size="23" fill="#2a2a2a" font-weight="normal" text-anchor="start" textLength="10" lengthAdjust="spacingAndGlyphs" >1</text><path d="M3230 93V96C3223 98 3221 104 3221 110V118L3217 121V124H3243V121L3239 118V110C3239 104 3237 98 3230 96Z" fill="#6a6a6a"/><path d="M3226 125a4 4 0 0 0 8 0Z" fill="#6a6a6a"/><circle cx="3238.5" cy="99.6" r="6.2" fill="#1a93db" stroke="#cbcbcb" stroke-width="1.2"/><circle cx="3296" cy="107.7" r="16" fill="#6a6a6a"/><text x="3296" y="118.5" font-size="28" fill="#cbcbcb" font-weight="bold" text-anchor="middle" >?</text><circle cx="3374" cy="107.7" r="24.8" fill="#f2f2f2"/><text x="3373" y="117.5" font-size="25" fill="#2a2a2a" font-weight="normal" text-anchor="middle" textLength="28" lengthAdjust="spacingAndGlyphs" >SB</text><rect x="25" y="163" width="216" height="118" rx="9" fill="#f2f2f2" stroke="#c6c6c6" stroke-width="2"/><text x="82" y="228" font-size="23" fill="#333333" font-weight="bold" text-anchor="start" textLength="81" lengthAdjust="spacingAndGlyphs" >DESIGN</text><path d="M176.5 221L187.6 221L182.05 229Z" fill="#333333"/><text x="300" y="171" font-size="25" fill="#3c3c3c" font-weight="normal" text-anchor="start" textLength="62" lengthAdjust="spacingAndGlyphs" >SOLID</text><text x="456" y="171" font-size="25" fill="#3c3c3c" font-weight="normal" text-anchor="start" textLength="95" lengthAdjust="spacingAndGlyphs" >SURFACE</text><text x="643" y="171" font-size="25" fill="#3c3c3c" font-weight="normal" text-anchor="start" textLength="57" lengthAdjust="spacingAndGlyphs" >MESH</text><text x="788" y="171" font-size="25" fill="#3c3c3c" font-weight="normal" text-anchor="start" textLength="144" lengthAdjust="spacingAndGlyphs" >SHEET METAL</text><text x="1025" y="171" font-size="25" fill="#3c3c3c" font-weight="normal" text-anchor="start" textLength="84" lengthAdjust="spacingAndGlyphs" >PLASTIC</text><text x="1200" y="171" font-size="25" fill="#3c3c3c" font-weight="normal" text-anchor="start" textLength="96" lengthAdjust="spacingAndGlyphs" >UTILITIES</text><text x="1387" y="171" font-size="25" fill="#3c3c3c" font-weight="normal" text-anchor="start" textLength="92" lengthAdjust="spacingAndGlyphs" >MANAGE</text><text x="1758.6" y="171" font-size="25" fill="#3c3c3c" font-weight="normal" text-anchor="start" textLength="186.4" lengthAdjust="spacingAndGlyphs" >VEX CAD LIBRARY</text><rect x="1548" y="140" width="139" height="46" fill="#cde8f6"/><rect x="1548" y="181" width="139" height="5" fill="#0a93d8"/><text x="1571.6" y="171" font-size="25" fill="#0b8fd6" font-weight="bold" text-anchor="start" textLength="88.4" lengthAdjust="spacingAndGlyphs" >SKETCH</text><text x="466" y="292" font-size="25" fill="#3c3c3c" font-weight="normal" text-anchor="start" textLength="81" lengthAdjust="spacingAndGlyphs" >CREATE</text><path d="M555 280L566 280L560.5 288Z" fill="#3c3c3c"/><text x="918" y="292" font-size="25" fill="#3c3c3c" font-weight="normal" text-anchor="start" textLength="83" lengthAdjust="spacingAndGlyphs" >MODIFY</text><path d="M1004 280L1015 280L1009.5 288Z" fill="#3c3c3c"/><text x="1591.7" y="292" font-size="25" fill="#3c3c3c" font-weight="normal" text-anchor="start" textLength="149" lengthAdjust="spacingAndGlyphs" >CONSTRAINTS</text><path d="M1748 280L1759 280L1753.5 288Z" fill="#3c3c3c"/><text x="2237" y="292" font-size="25" fill="#3c3c3c" font-weight="normal" text-anchor="start" textLength="123" lengthAdjust="spacingAndGlyphs" >CONFIGURE</text><path d="M2366 280L2377 280L2371.5 288Z" fill="#3c3c3c"/><text x="2443.5" y="292" font-size="25" fill="#3c3c3c" font-weight="normal" text-anchor="start" textLength="86" lengthAdjust="spacingAndGlyphs" >INSPECT</text><path d="M2535 280L2546 280L2540.5 288Z" fill="#3c3c3c"/><text x="2620" y="292" font-size="25" fill="#3c3c3c" font-weight="normal" text-anchor="start" textLength="73" lengthAdjust="spacingAndGlyphs" >INSERT</text><path d="M2700 280L2711 280L2705.5 288Z" fill="#3c3c3c"/><text x="2795.6" y="292" font-size="25" fill="#3c3c3c" font-weight="normal" text-anchor="start" textLength="74.4" lengthAdjust="spacingAndGlyphs" >SELECT</text><path d="M2877 280L2888 280L2882.5 288Z" fill="#3c3c3c"/><rect x="786.7" y="193" width="2" height="102" fill="#cfcfcf"/><rect x="1153" y="193" width="2" height="102" fill="#cfcfcf"/><rect x="2207" y="193" width="2" height="102" fill="#cfcfcf"/><rect x="2413" y="193" width="2" height="102" fill="#cfcfcf"/><rect x="2571" y="193" width="2" height="102" fill="#cfcfcf"/><rect x="2765" y="193" width="2" height="102" fill="#cfcfcf"/><rect x="2922" y="184" width="216" height="118" fill="#cde8f6"/><text x="2943" y="292" font-size="25" fill="#3c3c3c" font-weight="normal" text-anchor="start" textLength="157.6" lengthAdjust="spacingAndGlyphs" >FINISH SKETCH</text><path d="M3108 280L3119 280L3113.5 288Z" fill="#3c3c3c"/><circle cx="3030" cy="225.6" r="31" fill="#62c400"/><path d="M3014 226L3026 238L3047 216" stroke="#fff" stroke-width="8" fill="none" stroke-linecap="round" stroke-linejoin="round"/><path d="M281.8 240.7H312.4M322.3 210.8A15 15.3 0 0 1 322.3 241.4" stroke="#5e5e5e" stroke-width="2.3" fill="none"/><rect x="273.8" y="237.7" width="6" height="6" fill="#2190e8"/><rect x="313.8" y="237.7" width="6" height="6" fill="#2190e8"/><rect x="313.8" y="207.8" width="6" height="6" fill="#2190e8"/><path d="M366 204.7H419V241M416 244.6H362.7V208" stroke="#5e5e5e" stroke-width="2.3" fill="none"/><rect x="359.7" y="201.7" width="6" height="6" fill="#2190e8"/><rect x="416.0" y="241.6" width="6" height="6" fill="#2190e8"/><circle cx="476.7" cy="224.8" r="30.2" stroke="#5e5e5e" stroke-width="2.3" fill="none"/><path d="M480 221.5L491 210.5M473.4 228.1L462.4 239.1" stroke="#2190e8" stroke-width="2.6"/><path d="M495.5 206.4L485 209L492.5 216.5Z M457.9 243.2L468.4 240.6L460.9 233.1Z" fill="#2190e8"/><rect x="473.7" y="221.8" width="6" height="6" fill="#2190e8"/><path d="M534.9 251C535 238 537 228 541 218M551 212C560 215 570 232 576.5 236M585.5 232C589 226 592 212 592.8 201" stroke="#5e5e5e" stroke-width="2.3" fill="none"/><rect x="531.9" y="251.9" width="6" height="6" fill="#2190e8"/><rect x="543.9" y="211.9" width="6" height="6" fill="#2190e8"/><rect x="577.7" y="234.0" width="6" height="6" fill="#2190e8"/><rect x="589.8" y="194.0" width="6" height="6" fill="#2190e8"/><path d="M619 254.9L647.2 198.1V254.9Z" stroke="#5e5e5e" stroke-width="2.3" fill="none" stroke-linejoin="miter"/><path d="M650.4 198.1V254.9H678.8Z" stroke="#2190e8" stroke-width="2.3" fill="none"/><path d="M705 198V253.8M766.9 198V253.8" stroke="#5e5e5e" stroke-width="2.3"/><path d="M712 215H760" stroke="#2190e8" stroke-width="2.3"/><path d="M706.5 215L715 209.5V220.5Z M765.4 215L757 209.5V220.5Z" fill="#2190e8"/><path d="M812.7 231.3A37.4 36.5 0 0 1 850.1 194.8" stroke="#2190e8" stroke-width="2.4" fill="none"/><path d="M852 194.8H876M812.7 233.8V257.8" stroke="#5e5e5e" stroke-width="2.3"/><path d="M898 198.8H930" stroke="#2190e8" stroke-width="2.4" stroke-dasharray="5.5 3.2"/><path d="M946 198.8H961.7" stroke="#5e5e5e" stroke-width="2.3"/><path d="M934 194L941.5 201V235L937 238Z" fill="#2e2e2e"/><path d="M914 206.5V215L936 238L940 232Z" fill="#2e2e2e"/><ellipse cx="934" cy="247.5" rx="6" ry="8.5" stroke="#2e2e2e" stroke-width="4" fill="none" transform="rotate(10 934 247.5)"/><ellipse cx="950" cy="241.5" rx="6" ry="8.5" stroke="#2e2e2e" stroke-width="4" fill="none" transform="rotate(-50 950 241.5)"/><path d="M1048 203H1006A21 23 0 0 0 1006 249H1048" stroke="#2190e8" stroke-width="2.4" fill="none"/><path d="M1048 213H1008A12 13 0 0 0 1008 239H1048" stroke="#5e5e5e" stroke-width="2.3" fill="none"/><path d="M1071 257.4C1071.5 248 1073 238 1074.5 229.8M1133 194C1132.5 205 1131.5 218 1129.4 225.5" stroke="#5e5e5e" stroke-width="2.3" fill="none"/><path d="M1074.5 229.8C1077 220 1080 214 1085 214.3C1097 215 1109 241 1119 241C1124 241 1127.5 235 1129.4 227.5" stroke="#2190e8" stroke-width="2.4" fill="none"/><path d="M1214 200V231M1195 236.6H1226" stroke="#5e5e5e" stroke-width="2.3"/><path d="M1209.4 200V231M1195 241.3H1226M1200 200.5L1209 208M1200 209L1209 216.5M1200 218L1209 225.5M1196 250L1204 241.5M1206 250L1214 241.5M1216 250L1224 241.5" stroke="#cc2a2a" stroke-width="2.3" fill="none"/><path d="M1267 194V249.7" stroke="#cc2a2a" stroke-width="2.3"/><rect x="1264.0" y="252.0" width="6" height="6" fill="#cc2a2a"/><path d="M1272.3 255H1328" stroke="#5e5e5e" stroke-width="2.3"/><circle cx="1373.8" cy="232.6" r="23.4" stroke="#cc2a2a" stroke-width="2.3" fill="none"/><path d="M1372.5 196L1411.7 234.7" stroke="#5e5e5e" stroke-width="2.3"/><rect x="1448" y="212" width="40" height="8" fill="#cc2a2a"/><rect x="1448" y="232" width="40" height="8" fill="#676767"/><path d="M1531 238.9L1566.7 203.3" stroke="#cc2a2a" stroke-width="2.3"/><path d="M1541.2 248.9L1576.7 213.4" stroke="#5e5e5e" stroke-width="2.3"/><path d="M1614.5 210.5L1654.6 250.8" stroke="#cc2a2a" stroke-width="2.3"/><path d="M1635.7 230L1664.6 201.4" stroke="#5e5e5e" stroke-width="2.3"/><path d="M1711 221V209a13.5 13 0 0 1 27 0V221" stroke="#cc2a2a" stroke-width="5" fill="none"/><path d="M1711 221V209a13.5 13 0 0 1 27 0V221" stroke="#e39a9a" stroke-width="1.6" fill="none"/><rect x="1702" y="221.4" width="47" height="36" fill="#e0908f" stroke="#cc2a2a" stroke-width="2"/><path d="M1724.7 233V244" stroke="#cc2a2a" stroke-width="2.5"/><path d="M1785.4 252L1811 206.5L1839 252Z" stroke="#cc2a2a" stroke-width="2.3" fill="none"/><circle cx="1897.8" cy="225.7" r="27" stroke="#cc2a2a" stroke-width="2.3" fill="none"/><circle cx="1897.8" cy="225.7" r="15.2" stroke="#5e5e5e" stroke-width="2.3" fill="none"/><path d="M1957.4 252.5L1991 219.3" stroke="#5e5e5e" stroke-width="2.3"/><path d="M1993.2 216.7L2010.3 199.6" stroke="#cc2a2a" stroke-width="2.3"/><path d="M1956.3 212.2L1969 224.5" stroke="#2e2e2e" stroke-width="2.5"/><path d="M1975.6 231.5L1963 228L1971.5 219.5Z" fill="#2e2e2e"/><path d="M2059.6 206.4H2044.6V245H2059.6" stroke="#cc2a2a" stroke-width="2.3" fill="none"/><path d="M2068.8 198.3V254" stroke="#cc2a2a" stroke-width="2.3" stroke-dasharray="9 5"/><path d="M2077.8 206.4H2093.5V245H2077.8" stroke="#5e5e5e" stroke-width="2.3" fill="none"/><path d="M2142 201.7L2179.6 240" stroke="#cc2a2a" stroke-width="2.3"/><rect x="2157.8" y="217.8" width="6" height="6" fill="#cc2a2a"/><path d="M2131 212C2133 220 2140 222 2150 222C2156 222 2158 223 2156 223M2162 226C2160 233 2168 241 2164 248C2166 249 2170 249 2171 249" stroke="#5e5e5e" stroke-width="2" fill="none"/><path d="M2238 207.7L2252.5 194H2293.7L2280 207.7Z" fill="#f0f0f0" stroke="#6a6a6a" stroke-width="1.2"/><path d="M2280 207.7L2293.7 194V235.5L2280 249.7Z" fill="#bdbdbd" stroke="#6a6a6a" stroke-width="1.2"/><rect x="2238" y="207.7" width="42" height="42" fill="#d8d8d8" stroke="#6a6a6a" stroke-width="1.2"/><rect x="2272" y="235" width="32" height="9" fill="#f2f2f2"/><path d="M2274 239.7H2302M2274 252H2302" stroke="#676767" stroke-width="4"/><rect x="2279.5" y="233.5" width="5" height="12.5" fill="#2190e8" stroke="#f2f2f2" stroke-width="1"/><rect x="2291.5" y="246.5" width="4" height="11.5" fill="#676767"/><rect x="2358" y="235" width="32" height="9" fill="#f2f2f2"/><path d="M2360 239.7H2388M2360 252H2388" stroke="#676767" stroke-width="4"/><rect x="2365.5" y="233.5" width="5" height="12.5" fill="#2190e8" stroke="#f2f2f2" stroke-width="1"/><rect x="2377.5" y="246.5" width="4" height="11.5" fill="#676767"/><path d="M2360 251.7H2324.4V194H2383.8V233" stroke="#676767" stroke-width="2.2" fill="none"/><rect x="2324.4" y="194" width="59.4" height="11.4" fill="#676767"/><rect x="2328" y="197.5" width="8" height="4" fill="#f2f2f2"/><path d="M2331 212.5H2377.5V235M2331 212.5V243H2358M2331 222.5H2377M2331 233H2358M2342 212.5V243M2351.5 212.5V243" stroke="#676767" stroke-width="2" fill="none"/><path d="M2466.7 210V227.6M2521 210V227.6" stroke="#676767" stroke-width="2"/><path d="M2474 219H2514" stroke="#676767" stroke-width="2"/><path d="M2468 219L2477 214.5V223.5Z M2519.5 219L2510.5 214.5V223.5Z" fill="#676767"/><rect x="2466" y="230" width="55.8" height="11.7" fill="#f5a300" stroke="#e09400" stroke-width="1"/><path d="M2469.5 230V235" stroke="#555" stroke-width="1.4"/><path d="M2475.5 230V233" stroke="#555" stroke-width="1.4"/><path d="M2481.5 230V235" stroke="#555" stroke-width="1.4"/><path d="M2487.5 230V233" stroke="#555" stroke-width="1.4"/><path d="M2493.5 230V235" stroke="#555" stroke-width="1.4"/><path d="M2499.5 230V233" stroke="#555" stroke-width="1.4"/><path d="M2505.5 230V235" stroke="#555" stroke-width="1.4"/><path d="M2511.5 230V233" stroke="#555" stroke-width="1.4"/><path d="M2517.5 230V235" stroke="#555" stroke-width="1.4"/><rect x="2598.3" y="196.3" width="57.4" height="57.4" fill="#86c9fb" stroke="#3f95d4" stroke-width="2"/><path d="M2599.3 232C2606 222 2612 218 2618 221C2625 225 2628 241 2633 241C2638 241 2641 233 2646 233C2651 233 2654 238 2654.7 240V252.7H2599.3Z" fill="#4496d1"/><circle cx="2639.8" cy="212.2" r="6.3" fill="#fdfbd0" stroke="#b8dcf5" stroke-width="1.2"/><path d="M2688 196.3H2732a2 2 0 0 1 2 2V211.8H2686.3V198.3a2 2 0 0 1 1.7-2Z" fill="#6cb2e6" stroke="#3d8cc8" stroke-width="1"/><rect x="2722" y="197" width="12" height="14.8" fill="#3f8fcb"/><rect x="2696.5" y="211.8" width="27.2" height="45" rx="2" fill="#7fbde9" stroke="#3d8cc8" stroke-width="1"/><path d="M2697 216L2724 214" stroke="#3d8cc8" stroke-width="1.3"/><path d="M2697 221L2724 219" stroke="#3d8cc8" stroke-width="1.3"/><path d="M2697 226L2724 224" stroke="#3d8cc8" stroke-width="1.3"/><path d="M2697 231L2724 229" stroke="#3d8cc8" stroke-width="1.3"/><path d="M2697 236L2724 234" stroke="#3d8cc8" stroke-width="1.3"/><path d="M2697 241L2724 239" stroke="#3d8cc8" stroke-width="1.3"/><path d="M2697 246L2724 244" stroke="#3d8cc8" stroke-width="1.3"/><path d="M2697 251L2724 249" stroke="#3d8cc8" stroke-width="1.3"/><path d="M2732 231V257M2718.5 244H2745.5" stroke="#f2f2f2" stroke-width="13"/><path d="M2732 232V256M2719.5 244H2744.5" stroke="#1fa94a" stroke-width="8.5"/><rect x="2803.8" y="187" width="76.2" height="77" fill="#0b93d9"/><rect x="2810" y="194" width="55" height="43" fill="none" stroke="#8fe08f" stroke-width="1.8" stroke-dasharray="5 3.5"/><path d="M2852 223V255L2859 248L2865 258.5L2870 256L2864.5 245.5H2874Z" fill="#ffffff" stroke="#1d3c55" stroke-width="1"/><rect x="9" y="319" width="597" height="47" fill="#f0f0f0" stroke="#c6c6c6" stroke-width="2"/><path d="M18 342L27 336V348Z M27 342L36 336V348Z" fill="#333"/><text x="58.6" y="351.3" font-size="24" fill="#4a4a4a" font-weight="normal" text-anchor="start" textLength="98.4" lengthAdjust="spacingAndGlyphs" >BROWSER</text><circle cx="574.5" cy="343.5" r="8.5" fill="#222"/><rect x="569" y="342" width="11" height="3" fill="#fff"/><rect x="80" y="377.9" width="311.8" height="40" fill="#f0f0f0"/><rect x="116" y="425.9" width="284.0" height="40" fill="#f0f0f0"/><text x="175" y="454.2" font-size="23" fill="#343434" font-weight="normal" text-anchor="start" textLength="199" lengthAdjust="spacingAndGlyphs" >Document Settings</text><rect x="116" y="473.9" width="302.0" height="40" fill="#f0f0f0"/><text x="182.4" y="502.2" font-size="23" fill="#343434" font-weight="normal" text-anchor="start" textLength="165.6" lengthAdjust="spacingAndGlyphs" >Configuration 1</text><rect x="116" y="521.9" width="227.7" height="40" fill="#f0f0f0"/><text x="182.4" y="550.2" font-size="23" fill="#343434" font-weight="normal" text-anchor="start" textLength="140.6" lengthAdjust="spacingAndGlyphs" >Named Views</text><rect x="116" y="569.9" width="205.8" height="40" fill="#f0f0f0"/><text x="232.9" y="598.2" font-size="23" fill="#343434" font-weight="normal" text-anchor="start" textLength="63.5" lengthAdjust="spacingAndGlyphs" >Origin</text><rect x="116" y="617.9" width="205.8" height="40" fill="#f0f0f0"/><text x="232.9" y="646.2" font-size="23" fill="#343434" font-weight="normal" text-anchor="start" textLength="67.1" lengthAdjust="spacingAndGlyphs" >Bodies</text><rect x="116" y="665.9" width="229.5" height="40" fill="#f0f0f0"/><text x="232.9" y="694.2" font-size="23" fill="#343434" font-weight="normal" text-anchor="start" textLength="91.1" lengthAdjust="spacingAndGlyphs" >Sketches</text><rect x="152" y="713.9" width="221.5" height="40" fill="#f0f0f0"/><text x="267.4" y="742.2" font-size="23" fill="#343434" font-weight="normal" text-anchor="start" textLength="83.1" lengthAdjust="spacingAndGlyphs" >Sketch1</text><rect x="152" y="761.9" width="221.5" height="40" fill="#f0f0f0"/><text x="267.4" y="790.2" font-size="23" fill="#343434" font-weight="normal" text-anchor="start" textLength="83.1" lengthAdjust="spacingAndGlyphs" >Sketch2</text><rect x="152" y="809.9" width="221.5" height="40" fill="#f0f0f0"/><text x="267.4" y="838.2" font-size="23" fill="#343434" font-weight="normal" text-anchor="start" textLength="83.1" lengthAdjust="spacingAndGlyphs" >Sketch3</text><rect x="152" y="857.9" width="221.5" height="40" fill="#f0f0f0"/><text x="267.4" y="886.2" font-size="23" fill="#343434" font-weight="normal" text-anchor="start" textLength="83.1" lengthAdjust="spacingAndGlyphs" >Sketch4</text><rect x="152" y="905.9" width="221.5" height="40" fill="#f0f0f0"/><text x="267.4" y="934.2" font-size="23" fill="#343434" font-weight="normal" text-anchor="start" textLength="83.1" lengthAdjust="spacingAndGlyphs" >Sketch5</text><rect x="152" y="953.9" width="245.5" height="40" fill="#f0f0f0"/><text x="269" y="982.2" font-size="23" fill="#343434" font-weight="normal" text-anchor="start" textLength="107" lengthAdjust="spacingAndGlyphs" >base plate</text><rect x="116" y="1001.9" width="269.5" height="40" fill="#f0f0f0"/><text x="232.9" y="1030.2" font-size="23" fill="#343434" font-weight="normal" text-anchor="start" textLength="135.1" lengthAdjust="spacingAndGlyphs" >Construction</text><path d="M45 404.7L59 391V404.7Z" fill="#2a2a2a" stroke="#000" stroke-width="1"/><path d="M86 397.9C94 384.9 110 384.9 118 397.9C110 410.9 94 410.9 86 397.9Z" fill="#8a8a8a"/><circle cx="102" cy="397.9" r="5.5" fill="none" stroke="#f0f0f0" stroke-width="2.6"/><rect x="130" y="382" width="212" height="31.7" fill="#a0a0a0"/><path d="M140 388L145 383H164V403L159 408H140Z" fill="#dfe3ea" stroke="#333" stroke-width="1.3"/><path d="M140 388H159V408M159 388L164 383" stroke="#333" stroke-width="1.2" fill="none"/><path d="M159 388L164 383V403L159 408Z" fill="#b9c0cc"/><text x="196.8" y="406.4" font-size="24.5" fill="#ffffff" font-weight="bold" text-anchor="start" textLength="122.4" lengthAdjust="spacingAndGlyphs" >Untitled v6</text><circle cx="364" cy="397" r="12.5" fill="#eef0f4" stroke="#555" stroke-width="1.5"/><circle cx="364" cy="397" r="5.5" fill="#333"/><path d="M82 437.9L93 445.9L82 453.9Z" fill="#ffffff" stroke="#111" stroke-width="1.6" stroke-linejoin="round"/><circle cx="135" cy="445.9" r="9.6" fill="#808080"/><rect x="132.20" y="432.70" width="5.6" height="5.60" fill="#808080" transform="rotate(0 135 445.9)"/><rect x="132.20" y="432.70" width="5.6" height="5.60" fill="#808080" transform="rotate(45 135 445.9)"/><rect x="132.20" y="432.70" width="5.6" height="5.60" fill="#808080" transform="rotate(90 135 445.9)"/><rect x="132.20" y="432.70" width="5.6" height="5.60" fill="#808080" transform="rotate(135 135 445.9)"/><rect x="132.20" y="432.70" width="5.6" height="5.60" fill="#808080" transform="rotate(180 135 445.9)"/><rect x="132.20" y="432.70" width="5.6" height="5.60" fill="#808080" transform="rotate(225 135 445.9)"/><rect x="132.20" y="432.70" width="5.6" height="5.60" fill="#808080" transform="rotate(270 135 445.9)"/><rect x="132.20" y="432.70" width="5.6" height="5.60" fill="#808080" transform="rotate(315 135 445.9)"/><circle cx="135" cy="445.9" r="4.3" fill="#f0f0f0"/><path d="M122 483.9L127 477.9H149V503.9H122Z" fill="#d4d4d4" stroke="#777" stroke-width="1.2"/><path d="M143 483.9L149 477.9V501.9L143 505.9Z" fill="#bbb"/><rect x="138" y="499.9" width="18" height="12" fill="#f0f0f0"/><path d="M140 502.9H154M140 508.9H154" stroke="#555" stroke-width="2"/><rect x="143" y="498.9" width="2.5" height="7" fill="#2190e8"/><rect x="149" y="505.9" width="2.5" height="6" fill="#555"/><path d="M379 488.9L389.5 498.9L400 488.9" stroke="#777" stroke-width="4" fill="none"/><path d="M82 533.9L93 541.9L82 549.9Z" fill="#ffffff" stroke="#111" stroke-width="1.6" stroke-linejoin="round"/><path d="M122 528.9H134L137 530.9H154V554.9H122Z" fill="#9a9a9a"/><path d="M122 533.9H136L140 530.9" stroke="#f0f0f0" stroke-width="1.6" fill="none"/><path d="M82 581.9L93 589.9L82 597.9Z" fill="#ffffff" stroke="#111" stroke-width="1.6" stroke-linejoin="round"/><path d="M122 589.9C130 577.9 146 577.9 154 589.9C146 601.9 130 601.9 122 589.9Z" fill="none" stroke="#8a8a8a" stroke-width="1.8"/><path d="M133 592.9a6 6 0 0 1 8-9M143 586.9a6 6 0 0 1-8 9" fill="none" stroke="#8a8a8a" stroke-width="1.8"/><path d="M128 579.9L148 599.9" stroke="#8a8a8a" stroke-width="1.8"/><path d="M172 576.9H184L187 578.9H204V602.9H172Z" fill="#9a9a9a"/><path d="M172 581.9H186L190 578.9" stroke="#f0f0f0" stroke-width="1.6" fill="none"/><path d="M82 629.9L93 637.9L82 645.9Z" fill="#ffffff" stroke="#111" stroke-width="1.6" stroke-linejoin="round"/><path d="M122 637.9C130 625.9 146 625.9 154 637.9C146 649.9 130 649.9 122 637.9Z" fill="none" stroke="#8a8a8a" stroke-width="1.8"/><path d="M133 640.9a6 6 0 0 1 8-9M143 634.9a6 6 0 0 1-8 9" fill="none" stroke="#8a8a8a" stroke-width="1.8"/><path d="M128 627.9L148 647.9" stroke="#8a8a8a" stroke-width="1.8"/><path d="M172 624.9H184L187 626.9H204V650.9H172Z" fill="#9a9a9a"/><path d="M172 629.9H186L190 626.9" stroke="#f0f0f0" stroke-width="1.6" fill="none"/><path d="M81 692.9L94 678.9V692.9Z" fill="#333" stroke="#111" stroke-width="1.2"/><path d="M122 685.9C130 672.9 146 672.9 154 685.9C146 698.9 130 698.9 122 685.9Z" fill="#8a8a8a"/><circle cx="138" cy="685.9" r="5.5" fill="none" stroke="#f0f0f0" stroke-width="2.6"/><path d="M172 672.9H184L187 674.9H204V698.9H172Z" fill="#9a9a9a"/><path d="M172 677.9H186L190 674.9" stroke="#f0f0f0" stroke-width="1.6" fill="none"/><path d="M82 1013.9L93 1021.9L82 1029.9Z" fill="#ffffff" stroke="#111" stroke-width="1.6" stroke-linejoin="round"/><path d="M122 1021.9C130 1008.9 146 1008.9 154 1021.9C146 1034.9 130 1034.9 122 1021.9Z" fill="#8a8a8a"/><circle cx="138" cy="1021.9" r="5.5" fill="none" stroke="#f0f0f0" stroke-width="2.6"/><path d="M172 1008.9H184L187 1010.9H204V1034.9H172Z" fill="#9a9a9a"/><path d="M172 1013.9H186L190 1010.9" stroke="#f0f0f0" stroke-width="1.6" fill="none"/><path d="M158 733.9C166 720.9 182 720.9 190 733.9C182 746.9 166 746.9 158 733.9Z" fill="#8a8a8a"/><circle cx="174" cy="733.9" r="5.5" fill="none" stroke="#f0f0f0" stroke-width="2.6"/><path d="M209 720.4H235M209 720.4V747.4H225M235 720.4V732.4" stroke="#6a6a6a" stroke-width="1.4" fill="none"/><path d="M215 726.4H226M215 726.4V738.4M215 738.4C221 737.4 225 733.4 226 727.4" stroke="#6a6a6a" stroke-width="1.3" fill="none"/><rect x="207.2" y="718.6" width="3.6" height="3.6" fill="#2190e8"/><rect x="233.2" y="718.6" width="3.6" height="3.6" fill="#2190e8"/><rect x="207.2" y="745.6" width="3.6" height="3.6" fill="#2190e8"/><rect x="213.2" y="724.6" width="3.6" height="3.6" fill="#2190e8"/><rect x="224.2" y="724.6" width="3.6" height="3.6" fill="#2190e8"/><rect x="213.2" y="736.6" width="3.6" height="3.6" fill="#2190e8"/><path d="M224 747.4L234 737.4L238 741.4L228 751.4Z" fill="#f0b23c"/><circle cx="236.5" cy="738.9" r="3" fill="#e8302a"/><path d="M224 747.4L222 753.4L228 751.4Z" fill="#555"/><path d="M158 781.9C166 769.9 182 769.9 190 781.9C182 793.9 166 793.9 158 781.9Z" fill="none" stroke="#8a8a8a" stroke-width="1.8"/><path d="M169 784.9a6 6 0 0 1 8-9M179 778.9a6 6 0 0 1-8 9" fill="none" stroke="#8a8a8a" stroke-width="1.8"/><path d="M164 771.9L184 791.9" stroke="#8a8a8a" stroke-width="1.8"/><path d="M209 768.4H235M209 768.4V795.4H225M235 768.4V780.4" stroke="#6a6a6a" stroke-width="1.4" fill="none"/><path d="M215 774.4H226M215 774.4V786.4M215 786.4C221 785.4 225 781.4 226 775.4" stroke="#6a6a6a" stroke-width="1.3" fill="none"/><rect x="207.2" y="766.6" width="3.6" height="3.6" fill="#2190e8"/><rect x="233.2" y="766.6" width="3.6" height="3.6" fill="#2190e8"/><rect x="207.2" y="793.6" width="3.6" height="3.6" fill="#2190e8"/><rect x="213.2" y="772.6" width="3.6" height="3.6" fill="#2190e8"/><rect x="224.2" y="772.6" width="3.6" height="3.6" fill="#2190e8"/><rect x="213.2" y="784.6" width="3.6" height="3.6" fill="#2190e8"/><path d="M224 795.4L234 785.4L238 789.4L228 799.4Z" fill="#f0b23c"/><circle cx="236.5" cy="786.9" r="3" fill="#e8302a"/><path d="M224 795.4L222 801.4L228 799.4Z" fill="#555"/><path d="M158 829.9C166 817.9 182 817.9 190 829.9C182 841.9 166 841.9 158 829.9Z" fill="none" stroke="#8a8a8a" stroke-width="1.8"/><path d="M169 832.9a6 6 0 0 1 8-9M179 826.9a6 6 0 0 1-8 9" fill="none" stroke="#8a8a8a" stroke-width="1.8"/><path d="M164 819.9L184 839.9" stroke="#8a8a8a" stroke-width="1.8"/><path d="M209 816.4H235M209 816.4V843.4H225M235 816.4V828.4" stroke="#6a6a6a" stroke-width="1.4" fill="none"/><path d="M215 822.4H226M215 822.4V834.4M215 834.4C221 833.4 225 829.4 226 823.4" stroke="#6a6a6a" stroke-width="1.3" fill="none"/><rect x="207.2" y="814.6" width="3.6" height="3.6" fill="#2190e8"/><rect x="233.2" y="814.6" width="3.6" height="3.6" fill="#2190e8"/><rect x="207.2" y="841.6" width="3.6" height="3.6" fill="#2190e8"/><rect x="213.2" y="820.6" width="3.6" height="3.6" fill="#2190e8"/><rect x="224.2" y="820.6" width="3.6" height="3.6" fill="#2190e8"/><rect x="213.2" y="832.6" width="3.6" height="3.6" fill="#2190e8"/><path d="M224 843.4L234 833.4L238 837.4L228 847.4Z" fill="#f0b23c"/><circle cx="236.5" cy="834.9" r="3" fill="#e8302a"/><path d="M224 843.4L222 849.4L228 847.4Z" fill="#555"/><path d="M158 877.9C166 865.9 182 865.9 190 877.9C182 889.9 166 889.9 158 877.9Z" fill="none" stroke="#8a8a8a" stroke-width="1.8"/><path d="M169 880.9a6 6 0 0 1 8-9M179 874.9a6 6 0 0 1-8 9" fill="none" stroke="#8a8a8a" stroke-width="1.8"/><path d="M164 867.9L184 887.9" stroke="#8a8a8a" stroke-width="1.8"/><path d="M209 864.4H235M209 864.4V891.4H225M235 864.4V876.4" stroke="#6a6a6a" stroke-width="1.4" fill="none"/><path d="M215 870.4H226M215 870.4V882.4M215 882.4C221 881.4 225 877.4 226 871.4" stroke="#6a6a6a" stroke-width="1.3" fill="none"/><rect x="207.2" y="862.6" width="3.6" height="3.6" fill="#2190e8"/><rect x="233.2" y="862.6" width="3.6" height="3.6" fill="#2190e8"/><rect x="207.2" y="889.6" width="3.6" height="3.6" fill="#2190e8"/><rect x="213.2" y="868.6" width="3.6" height="3.6" fill="#2190e8"/><rect x="224.2" y="868.6" width="3.6" height="3.6" fill="#2190e8"/><rect x="213.2" y="880.6" width="3.6" height="3.6" fill="#2190e8"/><path d="M224 891.4L234 881.4L238 885.4L228 895.4Z" fill="#f0b23c"/><circle cx="236.5" cy="882.9" r="3" fill="#e8302a"/><path d="M224 891.4L222 897.4L228 895.4Z" fill="#555"/><path d="M158 925.9C166 913.9 182 913.9 190 925.9C182 937.9 166 937.9 158 925.9Z" fill="none" stroke="#8a8a8a" stroke-width="1.8"/><path d="M169 928.9a6 6 0 0 1 8-9M179 922.9a6 6 0 0 1-8 9" fill="none" stroke="#8a8a8a" stroke-width="1.8"/><path d="M164 915.9L184 935.9" stroke="#8a8a8a" stroke-width="1.8"/><path d="M209 912.4H235M209 912.4V939.4H225M235 912.4V924.4" stroke="#6a6a6a" stroke-width="1.4" fill="none"/><path d="M215 918.4H226M215 918.4V930.4M215 930.4C221 929.4 225 925.4 226 919.4" stroke="#6a6a6a" stroke-width="1.3" fill="none"/><rect x="207.2" y="910.6" width="3.6" height="3.6" fill="#2190e8"/><rect x="233.2" y="910.6" width="3.6" height="3.6" fill="#2190e8"/><rect x="207.2" y="937.6" width="3.6" height="3.6" fill="#2190e8"/><rect x="213.2" y="916.6" width="3.6" height="3.6" fill="#2190e8"/><rect x="224.2" y="916.6" width="3.6" height="3.6" fill="#2190e8"/><rect x="213.2" y="928.6" width="3.6" height="3.6" fill="#2190e8"/><path d="M224 939.4L234 929.4L238 933.4L228 943.4Z" fill="#f0b23c"/><circle cx="236.5" cy="930.9" r="3" fill="#e8302a"/><path d="M224 939.4L222 945.4L228 943.4Z" fill="#555"/><path d="M158 973.9C166 960.9 182 960.9 190 973.9C182 986.9 166 986.9 158 973.9Z" fill="#8a8a8a"/><circle cx="174" cy="973.9" r="5.5" fill="none" stroke="#f0f0f0" stroke-width="2.6"/><rect x="201.6" y="953.9" width="50.4" height="40" fill="#d6d6d6"/><path d="M209 960.4H235M209 960.4V987.4H225M235 960.4V972.4" stroke="#6a6a6a" stroke-width="1.4" fill="none"/><path d="M215 966.4H226M215 966.4V978.4M215 978.4C221 977.4 225 973.4 226 967.4" stroke="#6a6a6a" stroke-width="1.3" fill="none"/><rect x="207.2" y="958.6" width="3.6" height="3.6" fill="#2190e8"/><rect x="233.2" y="958.6" width="3.6" height="3.6" fill="#2190e8"/><rect x="207.2" y="985.6" width="3.6" height="3.6" fill="#2190e8"/><rect x="213.2" y="964.6" width="3.6" height="3.6" fill="#2190e8"/><rect x="224.2" y="964.6" width="3.6" height="3.6" fill="#2190e8"/><rect x="213.2" y="976.6" width="3.6" height="3.6" fill="#2190e8"/><path d="M224 987.4L234 977.4L238 981.4L228 991.4Z" fill="#f0b23c"/><circle cx="236.5" cy="978.9" r="3" fill="#e8302a"/><path d="M224 987.4L222 993.4L228 991.4Z" fill="#555"/><rect x="9" y="2057" width="597" height="47" fill="#f0f0f0" stroke="#c6c6c6" stroke-width="2"/><text x="58.6" y="2090" font-size="24" fill="#4a4a4a" font-weight="normal" text-anchor="start" textLength="122" lengthAdjust="spacingAndGlyphs" >COMMENTS</text><circle cx="575.5" cy="2080.5" r="8.5" fill="#222"/><path d="M570 2080.5H581M575.5 2075V2086" stroke="#fff" stroke-width="2.6"/><rect x="2913" y="558" width="497" height="48" fill="#f0f0f0" stroke="#c6c6c6" stroke-width="2"/><circle cx="2945" cy="582" r="9" fill="#222"/><path d="M2939.5 582H2950.5M2945 576.5V587.5" stroke="#fff" stroke-width="2.6"/><text x="2962" y="590" font-size="23" fill="#4a4a4a" font-weight="normal" text-anchor="start" textLength="180.5" lengthAdjust="spacingAndGlyphs" >SKETCH PALETTE</text><path d="M3382 576L3391 582L3382 588Z M3391 576L3400 582L3391 588Z" fill="#222"/><defs><radialGradient id="vcsh" cx="0.5" cy="0.5" r="0.5"><stop offset="0" stop-color="#000" stop-opacity="0.22"/><stop offset="0.6" stop-color="#000" stop-opacity="0.10"/><stop offset="1" stop-color="#000" stop-opacity="0"/></radialGradient><linearGradient id="vcL" x1="0" y1="0" x2="0.3" y2="1"><stop offset="0" stop-color="#f3f3f3"/><stop offset="1" stop-color="#dcdcdc"/></linearGradient><linearGradient id="vcR" x1="0" y1="0" x2="-0.3" y2="1"><stop offset="0" stop-color="#efefef"/><stop offset="1" stop-color="#d9d9d9"/></linearGradient></defs><ellipse cx="3293" cy="502" rx="95" ry="38" fill="url(#vcsh)"/><path d="M3292.6 365.2L3362.5 396.5L3292.6 435.3L3222.3 396.5Z" fill="#f1f1f1" stroke="#6a6a6a" stroke-width="0.9"/><path d="M3222.3 396.5L3292.6 435.3L3292.6 521L3229.3 470.8Z" fill="url(#vcL)" stroke="#6a6a6a" stroke-width="0.9"/><path d="M3292.6 435.3L3362.5 396.5L3355.5 470.8L3292.6 521Z" fill="url(#vcR)" stroke="#6a6a6a" stroke-width="0.9"/><path d="M3292.6 423L3307 431V450L3292.6 458L3278 450V431Z" fill="#e3e6ea" opacity="0.6"/><text x="0" y="0" font-size="21" fill="#8c9096" font-weight="bold" text-anchor="middle" textLength="38" lengthAdjust="spacingAndGlyphs" transform="matrix(0.866,-0.5,0.866,0.5,3296,402)">TOP</text><text x="0" y="0" font-size="23" fill="#8c9096" font-weight="bold" text-anchor="middle" textLength="33" lengthAdjust="spacingAndGlyphs" transform="matrix(0.866,0.5,0,1,3256,465)">LEFT</text><text x="0" y="0" font-size="23" fill="#8c9096" font-weight="bold" text-anchor="middle" textLength="47" lengthAdjust="spacingAndGlyphs" transform="matrix(0.866,-0.5,0,1,3328,467)">FRONT</text><path d="M3292.6 423V521" stroke="#3b3bf0" stroke-width="1.8"/><path d="M3292.6 521L3220.3 469" stroke="#7ee07e" stroke-width="2.2"/><path d="M3292.6 521L3364 469.6" stroke="#f07070" stroke-width="2.2"/><text x="3292.5" y="418.5" font-size="30" fill="#6b6bf5" text-anchor="middle">Z</text><text x="3212.3" y="473.5" font-size="30" fill="#7ce87c" text-anchor="middle">Y</text><text x="3372.6" y="473.5" font-size="30" fill="#f77a7a" text-anchor="middle">X</text><rect x="1474" y="2054" width="473.5" height="47.5" fill="#efefef"/><ellipse cx="1496.2" cy="2075.2" rx="15" ry="8" fill="none" stroke="#4a4a4a" stroke-width="1.5"/><ellipse cx="1495.6" cy="2076.7" rx="6.6" ry="14.6" fill="none" stroke="#4a4a4a" stroke-width="1.5" stroke-dasharray="40 6"/><path d="M1493.2 2076.2H1499.2M1496.2 2073.2V2079.2" stroke="#2190e8" stroke-width="1.6"/><path d="M1499 2066L1503 2068.5L1499 2071Z M1505 2071L1507 2075L1502.5 2075Z" fill="#4a4a4a"/><path d="M1522 2074L1534 2074L1528.0 2081.3Z" fill="#222"/><path d="M1550 2072L1553.5 2064.5L1567 2066L1569 2072Z" fill="#dfe3e8" stroke="#4a4a4a" stroke-width="1.2"/><rect x="1548.3" y="2072" width="27.6" height="18.3" fill="#e9ebee" stroke="#4a4a4a" stroke-width="1.4"/><rect x="1552.5" y="2076" width="19.2" height="10" fill="#9ea7b3" stroke="#555" stroke-width="0.8"/><path d="M1603 2079C1600 2075 1602 2072 1605 2074L1608 2077V2064C1608 2061 1612 2061 1612 2064V2074V2061C1612 2058 1616 2058 1616 2061V2074V2062C1616 2059 1620 2059 1620 2062V2075V2066C1620 2063 1624 2063 1624 2066V2081C1624 2088 1620 2092 1614 2092C1609 2092 1606 2087 1603 2079Z" fill="#fafafa" stroke="#4a4a4a" stroke-width="1.4"/><circle cx="1661.6" cy="2073.2" r="9.8" fill="#eef3f3" stroke="#4a4a4a" stroke-width="1.8"/><path d="M1668.5 2080.5L1680 2089.5" stroke="#333" stroke-width="3.6" stroke-linecap="round"/><path d="M1674.5 2066.5H1681M1677.7 2063.2V2069.8M1674.5 2071H1681" stroke="#4a4a4a" stroke-width="1.2"/><rect x="1703" y="2063" width="29.6" height="29.8" fill="none" stroke="#666" stroke-width="1.1" stroke-dasharray="3 2"/><circle cx="1714" cy="2073.8" r="9.8" fill="#eef3f3" stroke="#4a4a4a" stroke-width="1.8"/><path d="M1721 2081L1731 2090" stroke="#333" stroke-width="3.6" stroke-linecap="round"/><path d="M1744 2074L1756 2074L1750.0 2081.3Z" fill="#222"/><rect x="1769.5" y="2062.5" width="29.3" height="23.8" rx="1.5" fill="#f4f4f4" stroke="#4a4a4a" stroke-width="1.3"/><rect x="1772.5" y="2065.5" width="23.3" height="17.8" fill="#98b6df" stroke="#3d5f8c" stroke-width="0.8"/><path d="M1784 2086.3V2089.5M1777 2090.8H1791" stroke="#777" stroke-width="2"/><path d="M1804 2074L1816 2074L1810.0 2081.3Z" fill="#222"/><defs><linearGradient id="navg" x1="0" y1="0" x2="0" y2="1"><stop offset="0" stop-color="#f8f8f8"/><stop offset="1" stop-color="#9aa0a8"/></linearGradient></defs><rect x="1831" y="2063" width="28.7" height="28.8" fill="url(#navg)" stroke="#4a4a4a" stroke-width="1.3"/><path d="M1835.1 2063V2091.8M1831 2067.1H1859.7" stroke="#555" stroke-width="0.9"/><path d="M1839.2 2063V2091.8M1831 2071.2H1859.7" stroke="#555" stroke-width="0.9"/><path d="M1843.3 2063V2091.8M1831 2075.3H1859.7" stroke="#555" stroke-width="0.9"/><path d="M1847.4 2063V2091.8M1831 2079.4H1859.7" stroke="#555" stroke-width="0.9"/><path d="M1851.5 2063V2091.8M1831 2083.5H1859.7" stroke="#555" stroke-width="0.9"/><path d="M1855.6 2063V2091.8M1831 2087.6H1859.7" stroke="#555" stroke-width="0.9"/><path d="M1866 2074L1878 2074L1872.0 2081.3Z" fill="#222"/><rect x="1893" y="2065" width="28.8" height="24.7" fill="#3f5f95"/><rect x="1894.5" y="2066.5" width="12.3" height="10" fill="#95b3e0" stroke="#dbe6f5" stroke-width="0.8"/><rect x="1908" y="2066.5" width="12.3" height="10" fill="#95b3e0" stroke="#dbe6f5" stroke-width="0.8"/><rect x="1894.5" y="2078.2" width="12.3" height="10" fill="#95b3e0" stroke="#dbe6f5" stroke-width="0.8"/><rect x="1908" y="2078.2" width="12.3" height="10" fill="#95b3e0" stroke="#dbe6f5" stroke-width="0.8"/><path d="M1928 2074L1940 2074L1934.0 2081.3Z" fill="#222"/><rect x="0" y="2114" width="3420" height="4.5" fill="#c9c9c9"/><rect x="0" y="2118.5" width="270" height="1.5" fill="#c9c9c9"/><rect x="270" y="2118.5" width="3150" height="1.5" fill="#dedede"/><rect x="22" y="2156" width="4" height="24" fill="#676767"/><path d="M44 2157V2180L26.5 2168Z" fill="#676767"/><path d="M90 2156V2180L70.5 2168Z" fill="#676767"/><rect x="92" y="2164" width="4" height="9.5" fill="#676767"/><path d="M122 2152V2182L145.5 2167Z" fill="#676767"/><rect x="170" y="2164" width="4" height="9.5" fill="#676767"/><path d="M176 2156V2180L195.5 2168Z" fill="#676767"/><path d="M222 2157V2180L239.5 2168Z" fill="#676767"/><rect x="240" y="2156" width="4" height="24" fill="#676767"/><rect x="308" y="2198" width="2163" height="4" fill="#c8c8c8"/><rect x="308.1" y="2188" width="3.4" height="12" fill="#c8c8c8"/><path d="M294.8 2152.5H320.8M294.8 2152.5V2179.5H310.8M320.8 2152.5V2164.5" stroke="#6a6a6a" stroke-width="1.4" fill="none"/><path d="M300.8 2158.5H311.8M300.8 2158.5V2170.5M300.8 2170.5C306.8 2169.5 310.8 2165.5 311.8 2159.5" stroke="#6a6a6a" stroke-width="1.3" fill="none"/><rect x="293.0" y="2150.7" width="3.6" height="3.6" fill="#2190e8"/><rect x="319.0" y="2150.7" width="3.6" height="3.6" fill="#2190e8"/><rect x="293.0" y="2177.7" width="3.6" height="3.6" fill="#2190e8"/><rect x="299.0" y="2156.7" width="3.6" height="3.6" fill="#2190e8"/><rect x="310.0" y="2156.7" width="3.6" height="3.6" fill="#2190e8"/><rect x="299.0" y="2168.7" width="3.6" height="3.6" fill="#2190e8"/><path d="M309.8 2179.5L319.8 2169.5L323.8 2173.5L313.8 2183.5Z" fill="#f0b23c"/><circle cx="322.3" cy="2171.0" r="3" fill="#e8302a"/><path d="M309.8 2179.5L307.8 2185.5L313.8 2183.5Z" fill="#555"/><rect x="354.4" y="2188" width="3.4" height="12" fill="#c8c8c8"/><path d="M341.05 2152.5H367.05M341.05 2152.5V2179.5H357.05M367.05 2152.5V2164.5" stroke="#6a6a6a" stroke-width="1.4" fill="none"/><path d="M347.05 2158.5H358.05M347.05 2158.5V2170.5M347.05 2170.5C353.05 2169.5 357.05 2165.5 358.05 2159.5" stroke="#6a6a6a" stroke-width="1.3" fill="none"/><rect x="339.2" y="2150.7" width="3.6" height="3.6" fill="#2190e8"/><rect x="365.2" y="2150.7" width="3.6" height="3.6" fill="#2190e8"/><rect x="339.2" y="2177.7" width="3.6" height="3.6" fill="#2190e8"/><rect x="345.2" y="2156.7" width="3.6" height="3.6" fill="#2190e8"/><rect x="356.2" y="2156.7" width="3.6" height="3.6" fill="#2190e8"/><rect x="345.2" y="2168.7" width="3.6" height="3.6" fill="#2190e8"/><path d="M356.05 2179.5L366.05 2169.5L370.05 2173.5L360.05 2183.5Z" fill="#f0b23c"/><circle cx="368.55" cy="2171.0" r="3" fill="#e8302a"/><path d="M356.05 2179.5L354.05 2185.5L360.05 2183.5Z" fill="#555"/><rect x="402.3" y="2188" width="3.4" height="12" fill="#c8c8c8"/><g opacity="1"><path d="M388.00000000000006 2179H406.00000000000006L412.00000000000006 2173V2177L406.00000000000006 2183H388.00000000000006Z" fill="#b8b8b8"/><rect x="388.00000000000006" y="2156" width="18" height="22" fill="#68aee3"/><path d="M388.00000000000006 2156L394.00000000000006 2150H412.00000000000006L406.00000000000006 2156Z" fill="#8cc8f5"/><path d="M406.00000000000006 2156L412.00000000000006 2150V2172L406.00000000000006 2178Z" fill="#4a8fca"/><path d="M416.00000000000006 2178V2153" stroke="#222" stroke-width="1.6"/><path d="M416.00000000000006 2150L413.00000000000006 2156H419.00000000000006Z" fill="#222"/></g><rect x="450.3" y="2188" width="3.4" height="12" fill="#c8c8c8"/><g opacity="1"><path d="M435.95000000000005 2179H453.95000000000005L459.95000000000005 2173V2177L453.95000000000005 2183H435.95000000000005Z" fill="#b8b8b8"/><rect x="435.95000000000005" y="2156" width="18" height="22" fill="#68aee3"/><path d="M435.95000000000005 2156L441.95000000000005 2150H459.95000000000005L453.95000000000005 2156Z" fill="#8cc8f5"/><path d="M453.95000000000005 2156L459.95000000000005 2150V2172L453.95000000000005 2178Z" fill="#4a8fca"/><path d="M463.95000000000005 2178V2153" stroke="#222" stroke-width="1.6"/><path d="M463.95000000000005 2150L460.95000000000005 2156H466.95000000000005Z" fill="#222"/></g><rect x="498.2" y="2188" width="3.4" height="12" fill="#c8c8c8"/><path d="M484.90000000000003 2152.5H510.90000000000003M484.90000000000003 2152.5V2179.5H500.90000000000003M510.90000000000003 2152.5V2164.5" stroke="#6a6a6a" stroke-width="1.4" fill="none"/><path d="M490.90000000000003 2158.5H501.90000000000003M490.90000000000003 2158.5V2170.5M490.90000000000003 2170.5C496.90000000000003 2169.5 500.90000000000003 2165.5 501.90000000000003 2159.5" stroke="#6a6a6a" stroke-width="1.3" fill="none"/><rect x="483.1" y="2150.7" width="3.6" height="3.6" fill="#2190e8"/><rect x="509.1" y="2150.7" width="3.6" height="3.6" fill="#2190e8"/><rect x="483.1" y="2177.7" width="3.6" height="3.6" fill="#2190e8"/><rect x="489.1" y="2156.7" width="3.6" height="3.6" fill="#2190e8"/><rect x="500.1" y="2156.7" width="3.6" height="3.6" fill="#2190e8"/><rect x="489.1" y="2168.7" width="3.6" height="3.6" fill="#2190e8"/><path d="M499.90000000000003 2179.5L509.90000000000003 2169.5L513.9000000000001 2173.5L503.90000000000003 2183.5Z" fill="#f0b23c"/><circle cx="512.4000000000001" cy="2171.0" r="3" fill="#e8302a"/><path d="M499.90000000000003 2179.5L497.90000000000003 2185.5L503.90000000000003 2183.5Z" fill="#555"/><rect x="546.1" y="2188" width="3.4" height="12" fill="#c8c8c8"/><g opacity="1"><path d="M531.8499999999999 2179H549.8499999999999L555.8499999999999 2173V2177L549.8499999999999 2183H531.8499999999999Z" fill="#b8b8b8"/><rect x="531.8499999999999" y="2156" width="18" height="22" fill="#68aee3"/><path d="M531.8499999999999 2156L537.8499999999999 2150H555.8499999999999L549.8499999999999 2156Z" fill="#8cc8f5"/><path d="M549.8499999999999 2156L555.8499999999999 2150V2172L549.8499999999999 2178Z" fill="#4a8fca"/><path d="M559.8499999999999 2178V2153" stroke="#222" stroke-width="1.6"/><path d="M559.8499999999999 2150L556.8499999999999 2156H562.8499999999999Z" fill="#222"/></g><rect x="594.1" y="2188" width="3.4" height="12" fill="#c8c8c8"/><g opacity="1"><path d="M579.8 2179H597.8L603.8 2173V2177L597.8 2183H579.8Z" fill="#b8b8b8"/><rect x="579.8" y="2156" width="18" height="22" fill="#68aee3"/><path d="M579.8 2156L585.8 2150H603.8L597.8 2156Z" fill="#8cc8f5"/><path d="M597.8 2156L603.8 2150V2172L597.8 2178Z" fill="#4a8fca"/><path d="M607.8 2178V2153" stroke="#222" stroke-width="1.6"/><path d="M607.8 2150L604.8 2156H610.8Z" fill="#222"/></g><rect x="642.0" y="2188" width="3.4" height="12" fill="#c8c8c8"/><circle cx="631.75" cy="2167" r="3.5" fill="none" stroke="#666" stroke-width="1.2"/><circle cx="643.75" cy="2164" r="4" fill="#5aa5e0"/><circle cx="655.75" cy="2158" r="4" fill="#5aa5e0"/><path d="M627.75 2173C637.75 2178 647.75 2174 659.75 2166" stroke="#555" stroke-width="1.2" fill="none"/><rect x="690.0" y="2188" width="3.4" height="12" fill="#c8c8c8"/><g opacity="1"><path d="M675.7 2179H693.7L699.7 2173V2177L693.7 2183H675.7Z" fill="#b8b8b8"/><rect x="675.7" y="2156" width="18" height="22" fill="#68aee3"/><path d="M675.7 2156L681.7 2150H699.7L693.7 2156Z" fill="#8cc8f5"/><path d="M693.7 2156L699.7 2150V2172L693.7 2178Z" fill="#4a8fca"/><path d="M703.7 2178V2153" stroke="#222" stroke-width="1.6"/><path d="M703.7 2150L700.7 2156H706.7Z" fill="#222"/></g><rect x="737.9" y="2188" width="3.4" height="12" fill="#c8c8c8"/><g opacity="1"><path d="M723.65 2179H741.65L747.65 2173V2177L741.65 2183H723.65Z" fill="#b8b8b8"/><rect x="723.65" y="2156" width="18" height="22" fill="#68aee3"/><path d="M723.65 2156L729.65 2150H747.65L741.65 2156Z" fill="#8cc8f5"/><path d="M741.65 2156L747.65 2150V2172L741.65 2178Z" fill="#4a8fca"/><path d="M751.65 2178V2153" stroke="#222" stroke-width="1.6"/><path d="M751.65 2150L748.65 2156H754.65Z" fill="#222"/></g><rect x="785.9" y="2188" width="3.4" height="12" fill="#c8c8c8"/><path d="M772.5999999999999 2180V2159L777.5999999999999 2153H781.5999999999999V2180Z" fill="#ddd" stroke="#444" stroke-width="1.2"/><path d="M781.5999999999999 2180V2159L790.5999999999999 2151V2172Z" fill="#5cc270"/><path d="M793.5999999999999 2180V2159L802.5999999999999 2151V2172Z" fill="#e59b64"/><rect x="833.8" y="2188" width="3.4" height="12" fill="#c8c8c8"/><path d="M820.55 2152.5H846.55M820.55 2152.5V2179.5H836.55M846.55 2152.5V2164.5" stroke="#6a6a6a" stroke-width="1.4" fill="none"/><path d="M826.55 2158.5H837.55M826.55 2158.5V2170.5M826.55 2170.5C832.55 2169.5 836.55 2165.5 837.55 2159.5" stroke="#6a6a6a" stroke-width="1.3" fill="none"/><rect x="818.8" y="2150.7" width="3.6" height="3.6" fill="#2190e8"/><rect x="844.8" y="2150.7" width="3.6" height="3.6" fill="#2190e8"/><rect x="818.8" y="2177.7" width="3.6" height="3.6" fill="#2190e8"/><rect x="824.8" y="2156.7" width="3.6" height="3.6" fill="#2190e8"/><rect x="835.8" y="2156.7" width="3.6" height="3.6" fill="#2190e8"/><rect x="824.8" y="2168.7" width="3.6" height="3.6" fill="#2190e8"/><path d="M835.55 2179.5L845.55 2169.5L849.55 2173.5L839.55 2183.5Z" fill="#f0b23c"/><circle cx="848.05" cy="2171.0" r="3" fill="#e8302a"/><path d="M835.55 2179.5L833.55 2185.5L839.55 2183.5Z" fill="#555"/><rect x="881.8" y="2188" width="3.4" height="12" fill="#c8c8c8"/><rect x="868.5" y="2152" width="29" height="29" rx="7" fill="#9b6ad6" opacity="0.85"/><rect x="874.5" y="2158" width="16" height="16" fill="#7a4fc0" opacity="0.6"/><rect x="929.8" y="2188" width="3.4" height="12" fill="#c8c8c8"/><rect x="917.45" y="2152" width="22" height="14" fill="#7abbec"/><path d="M917.45 2152L923.45 2148H945.45L939.45 2152Z" fill="#9ed2f8"/><path d="M914.45 2168H939.45L947.45 2162" stroke="#2a8ee0" stroke-width="1.6" fill="none"/><rect x="917.45" y="2171" width="22" height="10" fill="#ddd" stroke="#555" stroke-width="1"/><rect x="977.7" y="2188" width="3.4" height="12" fill="#c8c8c8"/><g opacity="1"><path d="M963.4000000000001 2166L970.4000000000001 2160V2163H977.4000000000001V2169H970.4000000000001V2172Z" fill="#111"/><circle cx="985.4000000000001" cy="2166" r="8" fill="#8fb3e0" stroke="#1d3550" stroke-width="1.4"/></g><rect x="1025.6" y="2188" width="3.4" height="12" fill="#c8c8c8"/><path d="M1015.3499999999999 2172L1037.35 2160" stroke="#5a9fd6" stroke-width="14" stroke-linecap="round"/><path d="M1015.3499999999999 2172L1037.35 2160" stroke="#8cc6f2" stroke-width="10" stroke-linecap="round"/><circle cx="1015.3499999999999" cy="2172" r="4" fill="#5a9fd6"/><rect x="1073.6" y="2188" width="3.4" height="12" fill="#c8c8c8"/><path d="M1060.3 2152.5H1086.3M1060.3 2152.5V2179.5H1076.3M1086.3 2152.5V2164.5" stroke="#6a6a6a" stroke-width="1.4" fill="none"/><path d="M1066.3 2158.5H1077.3M1066.3 2158.5V2170.5M1066.3 2170.5C1072.3 2169.5 1076.3 2165.5 1077.3 2159.5" stroke="#6a6a6a" stroke-width="1.3" fill="none"/><rect x="1058.5" y="2150.7" width="3.6" height="3.6" fill="#2190e8"/><rect x="1084.5" y="2150.7" width="3.6" height="3.6" fill="#2190e8"/><rect x="1058.5" y="2177.7" width="3.6" height="3.6" fill="#2190e8"/><rect x="1064.5" y="2156.7" width="3.6" height="3.6" fill="#2190e8"/><rect x="1075.5" y="2156.7" width="3.6" height="3.6" fill="#2190e8"/><rect x="1064.5" y="2168.7" width="3.6" height="3.6" fill="#2190e8"/><path d="M1075.3 2179.5L1085.3 2169.5L1089.3 2173.5L1079.3 2183.5Z" fill="#f0b23c"/><circle cx="1087.8" cy="2171.0" r="3" fill="#e8302a"/><path d="M1075.3 2179.5L1073.3 2185.5L1079.3 2183.5Z" fill="#555"/><rect x="1121.5" y="2188" width="3.4" height="12" fill="#c8c8c8"/><g opacity="1"><path d="M1107.25 2179H1125.25L1131.25 2173V2177L1125.25 2183H1107.25Z" fill="#b8b8b8"/><rect x="1107.25" y="2156" width="18" height="22" fill="#68aee3"/><path d="M1107.25 2156L1113.25 2150H1131.25L1125.25 2156Z" fill="#8cc8f5"/><path d="M1125.25 2156L1131.25 2150V2172L1125.25 2178Z" fill="#4a8fca"/><path d="M1135.25 2178V2153" stroke="#222" stroke-width="1.6"/><path d="M1135.25 2150L1132.25 2156H1138.25Z" fill="#222"/></g><rect x="1169.5" y="2188" width="3.4" height="12" fill="#c8c8c8"/><path d="M1155.2 2158L1162.2 2151H1186.2V2174L1179.2 2181H1155.2Z" fill="#ddd" stroke="#666" stroke-width="2"/><path d="M1163.2 2172L1177.2 2159" stroke="#666" stroke-width="6" stroke-linecap="round" fill="none"/><path d="M1163.2 2172L1177.2 2159" stroke="#ddd" stroke-width="2.5" stroke-linecap="round"/><rect x="1217.5" y="2188" width="3.4" height="12" fill="#c8c8c8"/><g opacity="1"><path d="M1203.15 2166L1210.15 2160V2163H1217.15V2169H1210.15V2172Z" fill="#111"/><circle cx="1225.15" cy="2166" r="8" fill="#8fb3e0" stroke="#1d3550" stroke-width="1.4"/></g><rect x="1265.4" y="2188" width="3.4" height="12" fill="#c8c8c8"/><path d="M1252.1 2180V2159L1257.1 2153H1261.1V2180Z" fill="#ddd" stroke="#444" stroke-width="1.2"/><path d="M1261.1 2180V2159L1270.1 2151V2172Z" fill="#5cc270"/><path d="M1273.1 2180V2159L1282.1 2151V2172Z" fill="#e59b64"/><rect x="1313.3" y="2188" width="3.4" height="12" fill="#c8c8c8"/><path d="M1300.05 2180V2159L1305.05 2153H1309.05V2180Z" fill="#ddd" stroke="#444" stroke-width="1.2"/><path d="M1309.05 2180V2159L1318.05 2151V2172Z" fill="#5cc270"/><path d="M1321.05 2180V2159L1330.05 2151V2172Z" fill="#e59b64"/><rect x="1361.3" y="2188" width="3.4" height="12" fill="#c8c8c8"/><path d="M1348.0 2152.5H1374.0M1348.0 2152.5V2179.5H1364.0M1374.0 2152.5V2164.5" stroke="#6a6a6a" stroke-width="1.4" fill="none"/><path d="M1354.0 2158.5H1365.0M1354.0 2158.5V2170.5M1354.0 2170.5C1360.0 2169.5 1364.0 2165.5 1365.0 2159.5" stroke="#6a6a6a" stroke-width="1.3" fill="none"/><rect x="1346.2" y="2150.7" width="3.6" height="3.6" fill="#2190e8"/><rect x="1372.2" y="2150.7" width="3.6" height="3.6" fill="#2190e8"/><rect x="1346.2" y="2177.7" width="3.6" height="3.6" fill="#2190e8"/><rect x="1352.2" y="2156.7" width="3.6" height="3.6" fill="#2190e8"/><rect x="1363.2" y="2156.7" width="3.6" height="3.6" fill="#2190e8"/><rect x="1352.2" y="2168.7" width="3.6" height="3.6" fill="#2190e8"/><path d="M1363.0 2179.5L1373.0 2169.5L1377.0 2173.5L1367.0 2183.5Z" fill="#f0b23c"/><circle cx="1375.5" cy="2171.0" r="3" fill="#e8302a"/><path d="M1363.0 2179.5L1361.0 2185.5L1367.0 2183.5Z" fill="#555"/><rect x="1409.2" y="2188" width="3.4" height="12" fill="#c8c8c8"/><g opacity="0.35"><path d="M1394.95 2179H1412.95L1418.95 2173V2177L1412.95 2183H1394.95Z" fill="#b8b8b8"/><rect x="1394.95" y="2156" width="18" height="22" fill="#68aee3"/><path d="M1394.95 2156L1400.95 2150H1418.95L1412.95 2156Z" fill="#8cc8f5"/><path d="M1412.95 2156L1418.95 2150V2172L1412.95 2178Z" fill="#4a8fca"/><path d="M1422.95 2178V2153" stroke="#222" stroke-width="1.6"/><path d="M1422.95 2150L1419.95 2156H1425.95Z" fill="#222"/></g><rect x="1443.9" y="2161" width="8" height="11" fill="#ececec" stroke="#cfcfcf" stroke-width="2"/><rect x="1455.9" y="2161" width="8" height="11" fill="#ececec" stroke="#cfcfcf" stroke-width="2"/><rect x="1467.9" y="2161" width="8" height="11" fill="#ececec" stroke="#cfcfcf" stroke-width="2"/><rect x="1447.4" y="2189" width="19.6" height="19.6" fill="#7a7a7a"/><path d="M1450.4 2198.8H1463.4M1456.9 2192.3V2205.3" stroke="#fff" stroke-width="2.6"/><rect x="1505.1" y="2188" width="3.4" height="12" fill="#c8c8c8"/><path d="M1490.85 2158L1497.85 2151H1521.85V2174L1514.85 2181H1490.85Z" fill="#e8e8e8" stroke="#c8c8c8" stroke-width="2"/><path d="M1498.85 2172L1512.85 2159" stroke="#c8c8c8" stroke-width="6" stroke-linecap="round" fill="none"/><path d="M1498.85 2172L1512.85 2159" stroke="#e8e8e8" stroke-width="2.5" stroke-linecap="round"/><rect x="1539.8" y="2161" width="8" height="11" fill="#ececec" stroke="#cfcfcf" stroke-width="2"/><rect x="1551.8" y="2161" width="8" height="11" fill="#ececec" stroke="#cfcfcf" stroke-width="2"/><rect x="1563.8" y="2161" width="8" height="11" fill="#ececec" stroke="#cfcfcf" stroke-width="2"/><rect x="1543.3" y="2189" width="19.6" height="19.6" fill="#7a7a7a"/><path d="M1546.3 2198.8H1559.3M1552.8 2192.3V2205.3" stroke="#fff" stroke-width="2.6"/><rect x="1601.0" y="2188" width="3.4" height="12" fill="#c8c8c8"/><path d="M1602.75 2151V2181M1587.75 2166H1617.75" stroke="#c8c8c8" stroke-width="2.5"/><path d="M1602.75 2150L1597.75 2156H1607.75Z M1602.75 2182L1597.75 2176H1607.75Z M1586.75 2166L1592.75 2161V2171Z M1618.75 2166L1612.75 2161V2171Z" fill="#c8c8c8"/><rect x="1635.7" y="2161" width="8" height="11" fill="#ececec" stroke="#cfcfcf" stroke-width="2"/><rect x="1647.7" y="2161" width="8" height="11" fill="#ececec" stroke="#cfcfcf" stroke-width="2"/><rect x="1659.7" y="2161" width="8" height="11" fill="#ececec" stroke="#cfcfcf" stroke-width="2"/><rect x="1639.2" y="2189" width="19.6" height="19.6" fill="#7a7a7a"/><path d="M1642.2 2198.8H1655.2M1648.7 2192.3V2205.3" stroke="#fff" stroke-width="2.6"/><rect x="1683.65" y="2161" width="8" height="11" fill="#ececec" stroke="#cfcfcf" stroke-width="2"/><rect x="1695.65" y="2161" width="8" height="11" fill="#ececec" stroke="#cfcfcf" stroke-width="2"/><rect x="1707.65" y="2161" width="8" height="11" fill="#ececec" stroke="#cfcfcf" stroke-width="2"/><rect x="1687.2" y="2189" width="19.6" height="19.6" fill="#7a7a7a"/><path d="M1690.2 2198.8H1703.2M1696.7 2192.3V2205.3" stroke="#fff" stroke-width="2.6"/><rect x="1731.6" y="2161" width="8" height="11" fill="#ececec" stroke="#cfcfcf" stroke-width="2"/><rect x="1743.6" y="2161" width="8" height="11" fill="#ececec" stroke="#cfcfcf" stroke-width="2"/><rect x="1755.6" y="2161" width="8" height="11" fill="#ececec" stroke="#cfcfcf" stroke-width="2"/><rect x="1735.1" y="2189" width="19.6" height="19.6" fill="#7a7a7a"/><path d="M1738.1 2198.8H1751.1M1744.6 2192.3V2205.3" stroke="#fff" stroke-width="2.6"/><rect x="1779.55" y="2161" width="8" height="11" fill="#ececec" stroke="#cfcfcf" stroke-width="2"/><rect x="1791.55" y="2161" width="8" height="11" fill="#ececec" stroke="#cfcfcf" stroke-width="2"/><rect x="1803.55" y="2161" width="8" height="11" fill="#ececec" stroke="#cfcfcf" stroke-width="2"/><rect x="1783.0" y="2189" width="19.6" height="19.6" fill="#7a7a7a"/><path d="M1786.0 2198.8H1799.0M1792.5 2192.3V2205.3" stroke="#fff" stroke-width="2.6"/><rect x="1840.8" y="2188" width="3.4" height="12" fill="#c8c8c8"/><rect x="1826.5" y="2150" width="31" height="31" fill="#f4f4f4" stroke="#cfcfcf" stroke-width="1.2"/><rect x="1826.5" y="2150" width="16" height="15" fill="#cfe2f0"/><rect x="1841.5" y="2165" width="16" height="16" fill="#cfe2f0"/><rect x="1875.45" y="2161" width="8" height="11" fill="#ececec" stroke="#cfcfcf" stroke-width="2"/><rect x="1887.45" y="2161" width="8" height="11" fill="#ececec" stroke="#cfcfcf" stroke-width="2"/><rect x="1899.45" y="2161" width="8" height="11" fill="#ececec" stroke="#cfcfcf" stroke-width="2"/><rect x="1879.0" y="2189" width="19.6" height="19.6" fill="#7a7a7a"/><path d="M1882.0 2198.8H1895.0M1888.5 2192.3V2205.3" stroke="#fff" stroke-width="2.6"/><rect x="1936.7" y="2188" width="3.4" height="12" fill="#c8c8c8"/><rect x="1923.4" y="2150" width="15" height="15" rx="2" fill="#eee" stroke="#cfcfcf" stroke-width="1.6"/><rect x="1939.4" y="2166" width="15" height="15" rx="2" fill="#eee" stroke="#cfcfcf" stroke-width="1.6"/><path d="M1925.4 2171V2177H1934.4" stroke="#c8c8c8" stroke-width="1.6" fill="none"/><rect x="1984.6" y="2188" width="3.4" height="12" fill="#c8c8c8"/><path d="M1970.35 2158L1977.35 2151H2001.35V2174L1994.35 2181H1970.35Z" fill="#e8e8e8" stroke="#c8c8c8" stroke-width="2"/><path d="M1978.35 2172L1992.35 2159" stroke="#c8c8c8" stroke-width="6" stroke-linecap="round" fill="none"/><path d="M1978.35 2172L1992.35 2159" stroke="#e8e8e8" stroke-width="2.5" stroke-linecap="round"/><rect x="2032.6" y="2188" width="3.4" height="12" fill="#c8c8c8"/><path d="M2018.3 2158L2025.3 2151H2049.3V2174L2042.3 2181H2018.3Z" fill="#e8e8e8" stroke="#c8c8c8" stroke-width="2"/><path d="M2026.3 2172L2040.3 2159" stroke="#c8c8c8" stroke-width="6" stroke-linecap="round" fill="none"/><path d="M2026.3 2172L2040.3 2159" stroke="#e8e8e8" stroke-width="2.5" stroke-linecap="round"/><rect x="2067.2500000000005" y="2161" width="8" height="11" fill="#ececec" stroke="#cfcfcf" stroke-width="2"/><rect x="2079.2500000000005" y="2161" width="8" height="11" fill="#ececec" stroke="#cfcfcf" stroke-width="2"/><rect x="2091.2500000000005" y="2161" width="8" height="11" fill="#ececec" stroke="#cfcfcf" stroke-width="2"/><rect x="2070.8" y="2189" width="19.6" height="19.6" fill="#7a7a7a"/><path d="M2073.8 2198.8H2086.8M2080.3 2192.3V2205.3" stroke="#fff" stroke-width="2.6"/><rect x="2128.5" y="2188" width="3.4" height="12" fill="#c8c8c8"/><rect x="2115.2000000000003" y="2150" width="15" height="15" rx="2" fill="#eee" stroke="#cfcfcf" stroke-width="1.6"/><rect x="2131.2000000000003" y="2166" width="15" height="15" rx="2" fill="#eee" stroke="#cfcfcf" stroke-width="1.6"/><path d="M2117.2000000000003 2171V2177H2126.2000000000003" stroke="#c8c8c8" stroke-width="1.6" fill="none"/><rect x="2163.1500000000005" y="2161" width="8" height="11" fill="#ececec" stroke="#cfcfcf" stroke-width="2"/><rect x="2175.1500000000005" y="2161" width="8" height="11" fill="#ececec" stroke="#cfcfcf" stroke-width="2"/><rect x="2187.1500000000005" y="2161" width="8" height="11" fill="#ececec" stroke="#cfcfcf" stroke-width="2"/><rect x="2166.7" y="2189" width="19.6" height="19.6" fill="#7a7a7a"/><path d="M2169.7 2198.8H2182.7M2176.2 2192.3V2205.3" stroke="#fff" stroke-width="2.6"/><rect x="2224.4" y="2188" width="3.4" height="12" fill="#c8c8c8"/><rect x="2210.1000000000004" y="2150" width="13" height="31" fill="#f4f4f4" stroke="#cfcfcf" stroke-width="1.2"/><rect x="2223.1000000000004" y="2150" width="18" height="13" fill="#cfe2f0"/><rect x="2259.05" y="2161" width="8" height="11" fill="#ececec" stroke="#cfcfcf" stroke-width="2"/><rect x="2271.05" y="2161" width="8" height="11" fill="#ececec" stroke="#cfcfcf" stroke-width="2"/><rect x="2283.05" y="2161" width="8" height="11" fill="#ececec" stroke="#cfcfcf" stroke-width="2"/><rect x="2262.6" y="2189" width="19.6" height="19.6" fill="#7a7a7a"/><path d="M2265.6 2198.8H2278.6M2272.1 2192.3V2205.3" stroke="#fff" stroke-width="2.6"/><rect x="2320.3" y="2188" width="3.4" height="12" fill="#c8c8c8"/><rect x="2306.0000000000005" y="2150" width="13" height="31" fill="#f4f4f4" stroke="#cfcfcf" stroke-width="1.2"/><rect x="2319.0000000000005" y="2150" width="18" height="13" fill="#cfe2f0"/><rect x="2368.3" y="2188" width="3.4" height="12" fill="#c8c8c8"/><rect x="2353.9500000000003" y="2150" width="31" height="31" fill="#f4f4f4" stroke="#cfcfcf" stroke-width="1.2"/><rect x="2353.9500000000003" y="2150" width="16" height="15" fill="#cfe2f0"/><rect x="2368.9500000000003" y="2165" width="16" height="16" fill="#cfe2f0"/><rect x="2416.2" y="2188" width="3.4" height="12" fill="#c8c8c8"/><g opacity="0.4"><path d="M2401.9000000000005 2166L2408.9000000000005 2160V2163H2415.9000000000005V2169H2408.9000000000005V2172Z" fill="#111"/><circle cx="2423.9000000000005" cy="2166" r="8" fill="#8fb3e0" stroke="#1d3550" stroke-width="1.4"/></g><rect x="2465.9" y="2188" width="3.4" height="12" fill="#c8c8c8"/><rect x="2452.55" y="2150" width="14" height="18" rx="6" fill="#eee" stroke="#d8d8d8" stroke-width="1.2"/><path d="M2469.55 2168L2477.55 2163L2484.55 2168V2178L2477.55 2182L2469.55 2178Z" fill="#ece4d0"/><path d="M2454.55 2173V2178H2463.55" stroke="#c8c8c8" stroke-width="1.4" fill="none"/><path d="M2480 2138H2504V2147L2494 2158V2202H2490V2158L2480 2147Z" fill="#5f5f5f"/><circle cx="3376.7" cy="2166.7" r="11.2" fill="#868686"/><rect x="3373.60" y="2151.50" width="6.2" height="6.00" fill="#868686" transform="rotate(0 3376.7 2166.7)"/><rect x="3373.60" y="2151.50" width="6.2" height="6.00" fill="#868686" transform="rotate(45 3376.7 2166.7)"/><rect x="3373.60" y="2151.50" width="6.2" height="6.00" fill="#868686" transform="rotate(90 3376.7 2166.7)"/><rect x="3373.60" y="2151.50" width="6.2" height="6.00" fill="#868686" transform="rotate(135 3376.7 2166.7)"/><rect x="3373.60" y="2151.50" width="6.2" height="6.00" fill="#868686" transform="rotate(180 3376.7 2166.7)"/><rect x="3373.60" y="2151.50" width="6.2" height="6.00" fill="#868686" transform="rotate(225 3376.7 2166.7)"/><rect x="3373.60" y="2151.50" width="6.2" height="6.00" fill="#868686" transform="rotate(270 3376.7 2166.7)"/><rect x="3373.60" y="2151.50" width="6.2" height="6.00" fill="#868686" transform="rotate(315 3376.7 2166.7)"/><circle cx="3376.7" cy="2166.7" r="5.0" fill="#f2f2f2"/><path d="M3378.6 2070.6a16 16 0 1 0 0 32H3394.6V2086.6a16 16 0 0 0-16-16Z" fill="#111"/><path d="M3369 2091L3385 2080M3371 2095L3388 2083M3384 2093L3388 2090" stroke="#fff" stroke-width="1.6"/></svg></body></html>
